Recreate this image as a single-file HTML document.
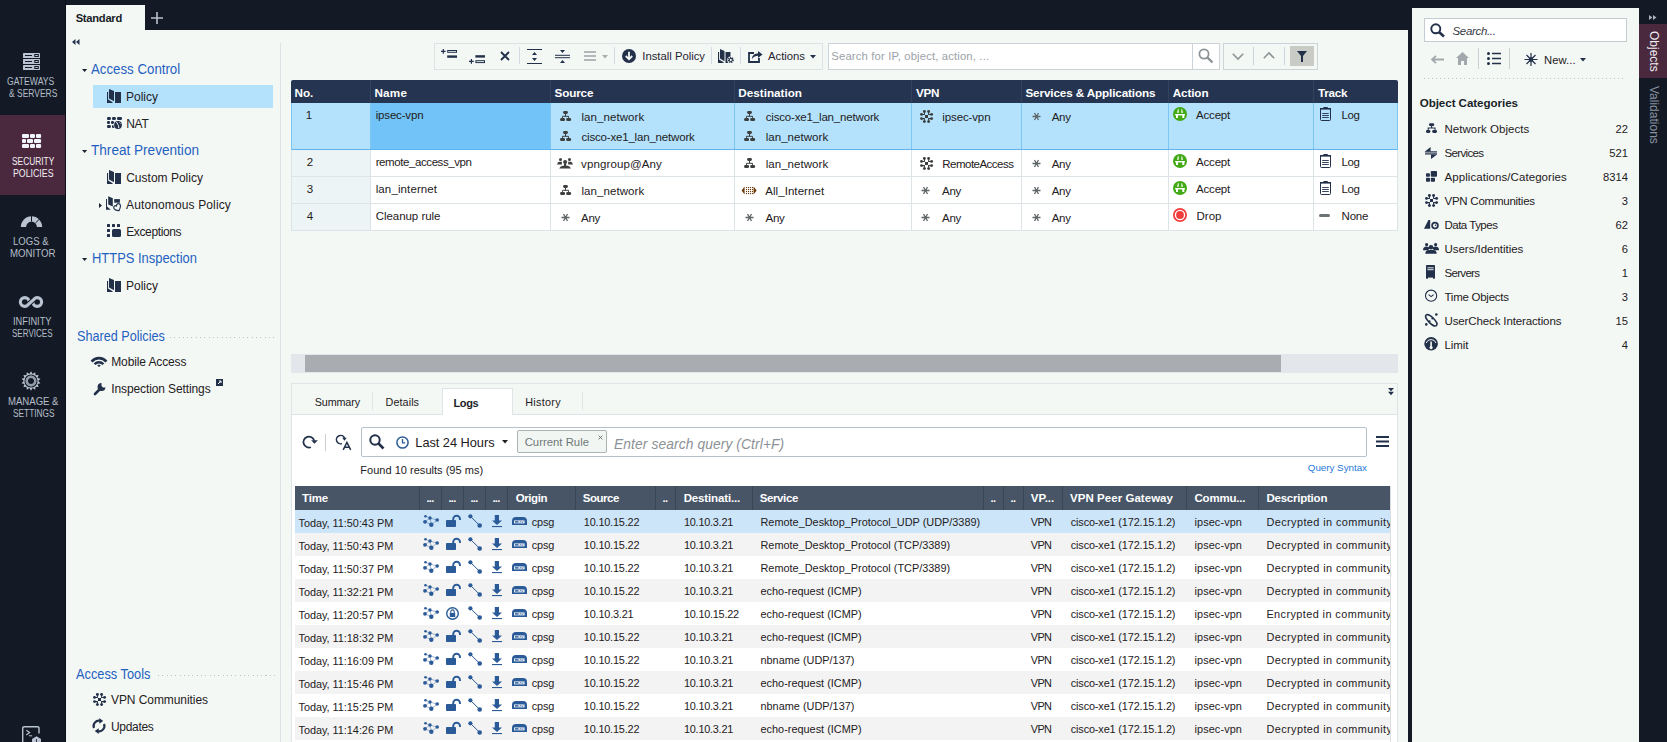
<!DOCTYPE html><html><head><meta charset="utf-8"><style>
*{box-sizing:border-box;margin:0;padding:0}
html,body{width:1667px;height:742px;overflow:hidden;background:#131a25;font-family:"Liberation Sans",sans-serif;color:#1c2330}
.a{position:absolute}
.t{position:absolute;white-space:nowrap;line-height:1}
svg{position:absolute;overflow:visible}
</style></head><body>
<div class="a" style="left:66px;top:30px;width:1342px;height:712px;background:#f4f8f5;"></div>
<div class="a" style="left:66px;top:5px;width:79px;height:25px;background:#f4f8f5;"></div>
<div class="a" style="left:1412px;top:8px;width:227px;height:734px;background:#f4f8f5;"></div>
<div class="a" style="left:1639px;top:24px;width:28px;height:54px;background:#4a293f;"></div>
<div class="a" style="left:0px;top:115px;width:65px;height:80px;background:#4a293f;"></div>
<div class="a" style="left:65px;top:0px;width:1px;height:742px;background:#0b0f17;"></div>
<svg style="left:23px;top:53px" width="17" height="17" viewBox="0 0 17 17"><rect x="0" y="0" width="17" height="5" rx="0.6" fill="#b9c3d1"/><rect x="2" y="2" width="7" height="1" fill="#131a25"/><rect x="11.3" y="1" width="4.5" height="3" fill="#131a25"/><rect x="12.3" y="2" width="2.5" height="1" fill="#b9c3d1"/><rect x="0" y="6" width="17" height="5" rx="0.6" fill="#b9c3d1"/><rect x="2" y="8" width="7" height="1" fill="#131a25"/><rect x="11.3" y="7" width="4.5" height="3" fill="#131a25"/><rect x="12.3" y="8" width="2.5" height="1" fill="#b9c3d1"/><rect x="0" y="12" width="17" height="5" rx="0.6" fill="#b9c3d1"/><rect x="2" y="14" width="7" height="1" fill="#131a25"/><rect x="11.3" y="13" width="4.5" height="3" fill="#131a25"/><rect x="12.3" y="14" width="2.5" height="1" fill="#b9c3d1"/></svg>
<div class="t" style="left:6.90px;top:77px;font-size:10px;color:#b4bdc9;font-weight:400;transform-origin:0 0;transform:scaleX(0.8627);">GATEWAYS</div>
<div class="t" style="left:8.90px;top:89px;font-size:10px;color:#b4bdc9;font-weight:400;transform-origin:0 0;transform:scaleX(0.8464);">&amp; SERVERS</div>
<svg style="left:22px;top:134px" width="19.1" height="14" viewBox="0 0 19.1 14"><rect x="0" y="0" width="7" height="4" rx="1.1" fill="#f0f4fb"/><rect x="8" y="0" width="5" height="4" rx="1.1" fill="#f0f4fb"/><rect x="14" y="0" width="5.1" height="4" rx="1.1" fill="#f0f4fb"/><rect x="0" y="5" width="4" height="4" rx="1.1" fill="#f0f4fb"/><rect x="5" y="5" width="6" height="4" rx="1.1" fill="#f0f4fb"/><rect x="12" y="5" width="7.1" height="4" rx="1.1" fill="#f0f4fb"/><rect x="0" y="10" width="7" height="4" rx="1.1" fill="#f0f4fb"/><rect x="8" y="10" width="5" height="4" rx="1.1" fill="#f0f4fb"/><rect x="14" y="10" width="5.1" height="4" rx="1.1" fill="#f0f4fb"/></svg>
<div class="t" style="left:11.70px;top:157px;font-size:10px;color:#f3eff4;font-weight:400;transform-origin:0 0;transform:scaleX(0.8366);">SECURITY</div>
<div class="t" style="left:12.70px;top:169px;font-size:10px;color:#f3eff4;font-weight:400;transform-origin:0 0;transform:scaleX(0.8778);">POLICIES</div>
<svg style="left:20px;top:215px" width="23" height="13" viewBox="0 0 23 13"><path d="M0.8 12 A10.7 10.7 0 0 1 22.2 12 H16.9 A5.4 5.4 0 0 0 6.1 12 Z" fill="#b9c3d1"/><path d="M11.5 0 V6.5" stroke="#131a25" stroke-width="1"/><path d="M15.3 8.2 L19.5 4" stroke="#131a25" stroke-width="1"/></svg>
<div class="t" style="left:12.70px;top:237px;font-size:10px;color:#b4bdc9;font-weight:400;transform-origin:0 0;transform:scaleX(0.9557);">LOGS &amp;</div>
<div class="t" style="left:9.70px;top:249px;font-size:10px;color:#b4bdc9;font-weight:400;transform-origin:0 0;transform:scaleX(0.9671);">MONITOR</div>
<svg style="left:18px;top:295px" width="26" height="14" viewBox="0 0 26 14"><circle cx="6.8" cy="7" r="4.4" stroke="#b9c3d1" stroke-width="3.2" fill="none"/><circle cx="19.2" cy="7" r="4.4" stroke="#b9c3d1" stroke-width="3.2" fill="none"/><path d="M9.2 10.4 L16.8 3.6" stroke="#131a25" stroke-width="5"/><path d="M9 10.6 L17 3.4" stroke="#b9c3d1" stroke-width="3.2"/></svg>
<div class="t" style="left:12.50px;top:317px;font-size:10px;color:#b4bdc9;font-weight:400;transform-origin:0 0;transform:scaleX(0.9239);">INFINITY</div>
<div class="t" style="left:11.70px;top:329px;font-size:10px;color:#b4bdc9;font-weight:400;transform-origin:0 0;transform:scaleX(0.8037);">SERVICES</div>
<svg style="left:21px;top:371px" width="20" height="20" viewBox="0 0 20 20"><polygon points="10.00,0.30 11.60,2.98 14.21,1.26 14.49,4.37 17.58,3.95 16.49,6.88 19.46,7.84 17.20,10.00 19.46,12.16 16.49,13.12 17.58,16.05 14.49,15.63 14.21,18.74 11.60,17.02 10.00,19.70 8.40,17.02 5.79,18.74 5.51,15.63 2.42,16.05 3.51,13.12 0.54,12.16 2.80,10.00 0.54,7.84 3.51,6.88 2.42,3.95 5.51,4.37 5.79,1.26 8.40,2.98" fill="#b9c3d1"/><circle cx="10" cy="10" r="6" fill="none" stroke="#131a25" stroke-width="1.1"/><circle cx="10" cy="10" r="4.3" fill="none" stroke="#8f99a6" stroke-width="2"/><circle cx="10" cy="10" r="3" fill="#131a25"/></svg>
<div class="t" style="left:7.70px;top:397px;font-size:10px;color:#b4bdc9;font-weight:400;transform-origin:0 0;transform:scaleX(0.9565);">MANAGE &amp;</div>
<div class="t" style="left:12.70px;top:409px;font-size:10px;color:#b4bdc9;font-weight:400;transform-origin:0 0;transform:scaleX(0.8297);">SETTINGS</div>
<svg style="left:22px;top:726px" width="20" height="16" viewBox="0 0 20 16"><path d="M17 7.5 V2.2 Q17 0.7 15.5 0.7 H2.2 Q0.7 0.7 0.7 2.2 V16" stroke="#b9c3d1" stroke-width="1.4" fill="none"/><path d="M4.3 4.3 L7.6 6.6 L4.3 8.9" stroke="#b9c3d1" stroke-width="1.2" fill="none"/><path d="M7 9.8 H10.2" stroke="#b9c3d1" stroke-width="1"/><path d="M10 13 L14.5 10.3 L19 13 V16 H10Z" fill="#b9c3d1"/><path d="M14.5 13 V16" stroke="#131a25" stroke-width="0.8"/></svg>
<div class="t" style="left:75.7px;top:13px;font-size:11.2px;color:#161c26;font-weight:700;letter-spacing:-0.275px;">Standard</div>
<svg style="left:151px;top:12px" width="12" height="12" viewBox="0 0 12 12"><path d="M6 0 V12 M0 6 H12" stroke="#b9c1cc" stroke-width="1.6"/></svg>
<div class="a" style="left:280px;top:43px;width:1px;height:699px;background:#dde2e5;"></div>
<svg style="left:72px;top:39px" width="8" height="6" viewBox="0 0 8 6"><path d="M3.5 0 L0 3 L3.5 6Z M7.5 0 L4 3 L7.5 6Z" fill="#23344f"/></svg>
<svg style="left:82px;top:69px" width="5.2" height="3" viewBox="0 0 5.2 3"><path d="M0 0 H5.2 L2.6 3Z" fill="#1c2233"/></svg>
<div class="t" style="left:91.20px;top:62px;font-size:14px;color:#1f61c0;font-weight:400;transform-origin:0 0;transform:scaleX(0.9474);">Access Control</div>
<div class="a" style="left:93px;top:85px;width:180px;height:23px;background:#b4e2fc;"></div>
<svg style="left:107px;top:89px" width="14" height="14" viewBox="0 0 14 14"><path d="M0 3 H1.1 V10.6 L5.6 13.2 V14 H0Z" fill="#22304a"/><path d="M2 0 L7 2 V12.2 L2 9.6Z" fill="#22304a"/><rect x="8" y="3" width="6" height="11" fill="#22304a"/></svg>
<div class="t" style="left:126px;top:91px;font-size:12px;color:#1e2022;font-weight:400;letter-spacing:-0.003px;">Policy</div>
<svg style="left:107px;top:117px" width="15" height="12" viewBox="0 0 15 12"><g fill="#22304a"><rect x="0" y="0" width="3.9" height="3" rx="1.2"/><rect x="5" y="0" width="3.9" height="3" rx="1.2"/><rect x="10" y="0" width="5" height="3" rx="1.2"/><rect x="0" y="4" width="3" height="3" rx="1.2"/><rect x="4" y="4" width="3" height="3" rx="1.2"/><rect x="0" y="8" width="3.9" height="3" rx="1.2"/><rect x="5" y="8" width="2.5" height="3" rx="1"/></g><circle cx="11" cy="8" r="4.6" fill="#f4f8f5"/><circle cx="11" cy="8" r="3.9" fill="#22304a"/><path d="M9.6 5 L10.6 7.2 L11.5 8.5 L11.8 11 M12.6 5.5 L13.6 6.5" stroke="#f4f8f5" stroke-width="1" fill="none"/></svg>
<div class="t" style="left:126.2px;top:118px;font-size:12px;color:#1e2022;font-weight:400;letter-spacing:-0.270px;">NAT</div>
<svg style="left:82px;top:150px" width="5.2" height="3" viewBox="0 0 5.2 3"><path d="M0 0 H5.2 L2.6 3Z" fill="#1c2233"/></svg>
<div class="t" style="left:91.20px;top:143px;font-size:14px;color:#1f61c0;font-weight:400;transform-origin:0 0;transform:scaleX(0.9704);">Threat Prevention</div>
<svg style="left:107px;top:170px" width="14" height="14" viewBox="0 0 14 14"><path d="M0 3 H1.1 V10.6 L5.6 13.2 V14 H0Z" fill="#22304a"/><path d="M2 0 L7 2 V12.2 L2 9.6Z" fill="#22304a"/><rect x="8" y="3" width="6" height="11" fill="#22304a"/></svg>
<div class="t" style="left:126.2px;top:172px;font-size:12px;color:#1e2022;font-weight:400;letter-spacing:0.009px;">Custom Policy</div>
<svg style="left:99px;top:203px" width="3" height="5" viewBox="0 0 3 5"><path d="M0 0 V5 L3 2.5Z" fill="#1c2233"/></svg>
<svg style="left:106px;top:196px" width="17" height="16" viewBox="0 0 17 16"><path d="M0 3 H1 V10.4 L4.8 13.8 H0Z" fill="#22304a"/><path d="M2.2 0.2 L6.8 2.2 V10.5 L2.2 8.5Z" fill="#22304a"/><rect x="8.2" y="3.1" width="5.7" height="3.6" fill="#22304a"/><path d="M11.5 15 C9 13.5 7.6 11.8 8 10.2 C8.4 8.6 10.3 8.3 11.2 9.6 C12 8 14.3 7.7 15 9.2 C15.6 10.6 14 13 11.5 15Z" fill="none" stroke="#22304a" stroke-width="1.2" transform="rotate(-25 11.5 11.5)"/></svg>
<div class="t" style="left:126px;top:199px;font-size:12px;color:#1e2022;font-weight:400;letter-spacing:0.133px;">Autonomous Policy</div>
<svg style="left:107px;top:224px" width="14" height="13" viewBox="0 0 14 13"><g fill="#22304a"><rect x="0" y="0" width="3" height="3" rx="0.5"/><rect x="5" y="0" width="3" height="3" rx="0.5"/><rect x="10" y="0" width="3" height="3" rx="0.5"/><rect x="0" y="5" width="3" height="3" rx="0.5"/><rect x="0" y="10" width="3" height="3" rx="0.5"/><rect x="5" y="5" width="9" height="8" rx="1.5"/></g></svg>
<div class="t" style="left:126.2px;top:226px;font-size:12px;color:#1e2022;font-weight:400;letter-spacing:-0.370px;">Exceptions</div>
<svg style="left:82px;top:258px" width="5.2" height="3" viewBox="0 0 5.2 3"><path d="M0 0 H5.2 L2.6 3Z" fill="#1c2233"/></svg>
<div class="t" style="left:91.50px;top:251px;font-size:14px;color:#1f61c0;font-weight:400;transform-origin:0 0;transform:scaleX(0.9233);">HTTPS Inspection</div>
<svg style="left:107px;top:278px" width="14" height="14" viewBox="0 0 14 14"><path d="M0 3 H1.1 V10.6 L5.6 13.2 V14 H0Z" fill="#22304a"/><path d="M2 0 L7 2 V12.2 L2 9.6Z" fill="#22304a"/><rect x="8" y="3" width="6" height="11" fill="#22304a"/></svg>
<div class="t" style="left:126px;top:280px;font-size:12px;color:#1e2022;font-weight:400;letter-spacing:-0.003px;">Policy</div>
<div class="t" style="left:76.60px;top:329px;font-size:14px;color:#1f61c0;font-weight:400;transform-origin:0 0;transform:scaleX(0.9025);">Shared Policies</div>
<div class="a" style="left:170px;top:337px;width:105px;height:1px;background:repeating-linear-gradient(90deg,#bcc3ca 0 1px,transparent 1px 4.3px);"></div>
<svg style="left:91px;top:356px" width="16" height="11" viewBox="0 0 16 11"><path d="M0.6 5.6 A9.8 9.8 0 0 1 15.4 5.6" stroke="#22304a" stroke-width="2.7" fill="none"/><path d="M3.6 8.2 A5.8 5.8 0 0 1 12.4 8.2" stroke="#22304a" stroke-width="2.5" fill="none"/><path d="M6.2 9.6 L8 8.6 L9.8 9.6 L8 11Z" fill="#22304a"/></svg>
<div class="t" style="left:111.2px;top:356px;font-size:12px;color:#1e2022;font-weight:400;letter-spacing:-0.116px;">Mobile Access</div>
<svg style="left:93px;top:381px" width="14" height="14" viewBox="0 0 14 14"><path d="M2 13 L8 7" stroke="#22304a" stroke-width="2.6" stroke-linecap="round"/><path d="M8.5 2 A4 4 0 1 0 12.5 6.5 L10 6.5 L8.5 5 Z" fill="#22304a"/></svg>
<div class="t" style="left:111.2px;top:383px;font-size:12px;color:#1e2022;font-weight:400;letter-spacing:-0.106px;">Inspection Settings</div>
<svg style="left:216px;top:379px" width="7" height="7" viewBox="0 0 7 7"><rect x="0" y="0" width="7" height="7" fill="#22304a"/><path d="M2 5 L5 2 M3 2 H5 V4" stroke="#f4f8f5" stroke-width="1" fill="none"/></svg>
<div class="t" style="left:76.00px;top:667px;font-size:14px;color:#1f61c0;font-weight:400;transform-origin:0 0;transform:scaleX(0.9134);">Access Tools</div>
<div class="a" style="left:157.5px;top:675px;width:117px;height:1px;background:repeating-linear-gradient(90deg,#bcc3ca 0 1px,transparent 1px 4.3px);"></div>
<div class="t" style="left:111px;top:694px;font-size:12px;color:#1e2022;font-weight:400;letter-spacing:-0.075px;">VPN Communities</div>
<svg style="left:92px;top:718px" width="14" height="16" viewBox="0 0 14 16"><path d="M2 10 A5.3 5.3 0 0 1 8 2.8" stroke="#22304a" stroke-width="2.2" fill="none"/><path d="M7.3 0 L11.2 3 L7.3 5.8Z" fill="#22304a"/><path d="M12 6 A5.3 5.3 0 0 1 6 13.2" stroke="#22304a" stroke-width="2.2" fill="none"/><path d="M6.7 10.2 L2.8 13.1 L6.7 16Z" fill="#22304a"/></svg>
<div class="t" style="left:111px;top:721px;font-size:12px;color:#1e2022;font-weight:400;letter-spacing:-0.315px;">Updates</div>
<div class="a" style="left:434px;top:43px;width:389px;height:27px;border:1px solid #dce2e6;background:#f4f8f5"></div>
<svg style="left:441px;top:49px" width="16" height="9" viewBox="0 0 16 9"><path d="M2.3 0 V4.8 M0 2.4 H4.6" stroke="#22304a" stroke-width="1.2"/><rect x="6.7" y="1.5" width="8.8" height="1.8" fill="none" stroke="#22304a" stroke-width="1"/><rect x="6.2" y="6.4" width="9.8" height="2.4" fill="#22304a"/></svg>
<svg style="left:469px;top:55px" width="16" height="9" viewBox="0 0 16 9"><path d="M2.4 4 V8.8 M0 6.4 H4.8" stroke="#22304a" stroke-width="1.2"/><rect x="6.4" y="0.2" width="9.6" height="2.4" fill="#22304a"/><rect x="6.9" y="5.7" width="8.6" height="1.9" fill="none" stroke="#22304a" stroke-width="1"/></svg>
<svg style="left:500px;top:51px" width="10" height="10" viewBox="0 0 10 10"><path d="M1 1 L9 9 M9 1 L1 9" stroke="#22304a" stroke-width="1.9"/></svg>
<div class="a" style="left:519px;top:47px;width:1px;height:17px;background:#d5dbe0;"></div>
<svg style="left:527px;top:49px" width="15" height="15" viewBox="0 0 15 15"><path d="M0 0.5 H15 M0 14.5 H15" stroke="#22304a" stroke-width="1.1"/><path d="M7.5 3 L10 6 H5Z M7.5 12 L10 9 H5Z" fill="#22304a"/></svg>
<svg style="left:555px;top:49px" width="15" height="15" viewBox="0 0 15 15"><path d="M0 6.3 H15 M0 8.7 H15" stroke="#22304a" stroke-width="1"/><path d="M7.5 4 L10 1 H5Z M7.5 11 L10 14 H5Z" fill="#22304a"/></svg>
<svg style="left:584px;top:51px" width="13" height="10" viewBox="0 0 13 10"><path d="M0 1 H12 M0 5 H12 M0 9 H12" stroke="#9ea3a6" stroke-width="1.6"/></svg>
<svg style="left:602px;top:55px" width="6" height="3.5" viewBox="0 0 6 3.5"><path d="M0 0 H6 L3 3.5Z" fill="#a8adb0"/></svg>
<div class="a" style="left:614px;top:47px;width:1px;height:17px;background:#d5dbe0;"></div>
<svg style="left:622px;top:49px" width="14" height="14" viewBox="0 0 14 14"><circle cx="7" cy="7" r="7" fill="#22304a"/><path d="M7 2.8 V10 M3.8 7 L7 10.3 L10.2 7" stroke="#f4f8f5" stroke-width="1.8" fill="none"/></svg>
<div class="t" style="left:642.3px;top:51px;font-size:11.3px;color:#1f2530;font-weight:400;letter-spacing:-0.007px;">Install Policy</div>
<div class="a" style="left:711px;top:47px;width:1px;height:17px;background:#d5dbe0;"></div>
<svg style="left:718px;top:49px" width="16" height="14" viewBox="0 0 16 14"><path d="M0 3 H1.1 V10.6 L5.6 13.2 V14 H0Z" fill="#22304a"/><path d="M2 0 L6.5 2 V12.2 L2 9.6Z" fill="#22304a"/><rect x="7.5" y="3" width="5" height="11" fill="#22304a"/><circle cx="12.8" cy="11" r="3.6" fill="#f4f8f5"/><circle cx="12.8" cy="11" r="2.3" fill="none" stroke="#22304a" stroke-width="1.5" stroke-dasharray="1.1 0.7"/><circle cx="12.8" cy="11" r="1.6" fill="none" stroke="#22304a" stroke-width="1"/></svg>
<div class="a" style="left:740px;top:47px;width:1px;height:17px;background:#d5dbe0;"></div>
<svg style="left:748px;top:49px" width="15" height="14" viewBox="0 0 15 14"><path d="M6 4 H1 V13 H11 V9" stroke="#22304a" stroke-width="1.8" fill="none"/><path d="M4 10 C4 6 7 4.5 10 4.5 V2 L14.5 5.5 L10 9 V6.8 C8 6.8 5.5 7.5 4 10Z" fill="#22304a"/></svg>
<div class="t" style="left:768px;top:51px;font-size:11.3px;color:#1f2530;font-weight:400;letter-spacing:-0.007px;">Actions</div>
<svg style="left:810px;top:55px" width="6" height="3.5" viewBox="0 0 6 3.5"><path d="M0 0 H6 L3 3.5Z" fill="#22304a"/></svg>
<div class="a" style="left:828px;top:43px;width:392px;height:27px;border:1px solid #ccd3d9;background:#fff"></div>
<div class="a" style="left:1192px;top:44px;width:1px;height:25px;background:#ccd3d9;"></div>
<div class="t" style="left:831.3px;top:51px;font-size:11.3px;color:#9ba2a8;font-weight:400;letter-spacing:0.144px;">Search for IP, object, action, ...</div>
<svg style="left:1198px;top:48px" width="16" height="16" viewBox="0 0 16 16"><circle cx="6" cy="6" r="4.6" stroke="#8e9496" stroke-width="1.8" fill="none"/><path d="M9.3 9.3 L14.5 14.5" stroke="#8e9496" stroke-width="2.4"/></svg>
<div class="a" style="left:1223px;top:43px;width:95px;height:27px;border:1px solid #ccd3d9;background:#f4f8f5"></div>
<svg style="left:1232px;top:53px" width="12" height="7" viewBox="0 0 12 7"><path d="M0.8 0.8 L6 6 L11.2 0.8" stroke="#8e9496" stroke-width="1.6" fill="none"/></svg>
<div class="a" style="left:1253px;top:47px;width:1px;height:18px;background:#ccd3d9;"></div>
<svg style="left:1263px;top:52px" width="12" height="7" viewBox="0 0 12 7"><path d="M0.8 6.2 L6 1 L11.2 6.2" stroke="#8e9496" stroke-width="1.6" fill="none"/></svg>
<div class="a" style="left:1284px;top:47px;width:1px;height:18px;background:#ccd3d9;"></div>
<div class="a" style="left:1290px;top:46px;width:24px;height:20px;background:#c8cbc6;"></div>
<svg style="left:1297px;top:51px" width="10" height="11" viewBox="0 0 10 11"><path d="M0 0 H10 L6 5 V11 H4 V5Z" fill="#22304a"/></svg>
<div class="a" style="left:291px;top:80px;width:1107px;height:23px;background:#253450;border-radius:2px 2px 0 0"></div>
<div class="a" style="left:370px;top:80px;width:1px;height:23px;background:#34435d;"></div>
<div class="a" style="left:550px;top:80px;width:1px;height:23px;background:#34435d;"></div>
<div class="a" style="left:734px;top:80px;width:1px;height:23px;background:#34435d;"></div>
<div class="a" style="left:911px;top:80px;width:1px;height:23px;background:#34435d;"></div>
<div class="a" style="left:1021px;top:80px;width:1px;height:23px;background:#34435d;"></div>
<div class="a" style="left:1168px;top:80px;width:1px;height:23px;background:#34435d;"></div>
<div class="a" style="left:1313px;top:80px;width:1px;height:23px;background:#34435d;"></div>
<div class="t" style="left:294.6px;top:87px;font-size:11.7px;color:#ffffff;font-weight:700;letter-spacing:-0.043px;">No.</div>
<div class="t" style="left:374.4px;top:87px;font-size:11.7px;color:#ffffff;font-weight:700;letter-spacing:0.264px;">Name</div>
<div class="t" style="left:554.6px;top:87px;font-size:11.7px;color:#ffffff;font-weight:700;letter-spacing:-0.154px;">Source</div>
<div class="t" style="left:738.3px;top:87px;font-size:11.7px;color:#ffffff;font-weight:700;letter-spacing:0.005px;">Destination</div>
<div class="t" style="left:916px;top:87px;font-size:11.7px;color:#ffffff;font-weight:700;letter-spacing:-0.282px;">VPN</div>
<div class="t" style="left:1025.4px;top:87px;font-size:11.7px;color:#ffffff;font-weight:700;letter-spacing:-0.119px;">Services &amp; Applications</div>
<div class="t" style="left:1172.8px;top:87px;font-size:11.7px;color:#ffffff;font-weight:700;letter-spacing:-0.127px;">Action</div>
<div class="t" style="left:1318px;top:87px;font-size:11.7px;color:#ffffff;font-weight:700;letter-spacing:-0.269px;">Track</div>
<div class="a" style="left:291px;top:103px;width:1107px;height:46px;background:#b4e2fc;"></div>
<div class="a" style="left:371px;top:103px;width:179px;height:46px;background:#72c3f7;"></div>
<div class="a" style="left:291px;top:149px;width:1107px;height:1px;background:#5fb4ef;"></div>
<div class="a" style="left:370px;top:103px;width:1px;height:46px;background:#7cc6f4;"></div>
<div class="a" style="left:550px;top:103px;width:1px;height:46px;background:#7cc6f4;"></div>
<div class="a" style="left:734px;top:103px;width:1px;height:46px;background:#7cc6f4;"></div>
<div class="a" style="left:911px;top:103px;width:1px;height:46px;background:#7cc6f4;"></div>
<div class="a" style="left:1021px;top:103px;width:1px;height:46px;background:#7cc6f4;"></div>
<div class="a" style="left:1168px;top:103px;width:1px;height:46px;background:#7cc6f4;"></div>
<div class="a" style="left:1313px;top:103px;width:1px;height:46px;background:#7cc6f4;"></div>
<div class="a" style="left:291px;top:103px;width:1px;height:47px;background:#7cc6f4;"></div>
<div class="a" style="left:1397px;top:103px;width:1px;height:47px;background:#7cc6f4;"></div>
<div class="a" style="left:291px;top:150px;width:79px;height:26px;background:#edf4f5;"></div>
<div class="a" style="left:370px;top:150px;width:1028px;height:26px;background:#ffffff;"></div>
<div class="a" style="left:291px;top:176px;width:1107px;height:1px;background:#dde4e8;"></div>
<div class="a" style="left:370px;top:150px;width:1px;height:26px;background:#dde4e8;"></div>
<div class="a" style="left:550px;top:150px;width:1px;height:26px;background:#dde4e8;"></div>
<div class="a" style="left:734px;top:150px;width:1px;height:26px;background:#dde4e8;"></div>
<div class="a" style="left:911px;top:150px;width:1px;height:26px;background:#dde4e8;"></div>
<div class="a" style="left:1021px;top:150px;width:1px;height:26px;background:#dde4e8;"></div>
<div class="a" style="left:1168px;top:150px;width:1px;height:26px;background:#dde4e8;"></div>
<div class="a" style="left:1313px;top:150px;width:1px;height:26px;background:#dde4e8;"></div>
<div class="a" style="left:291px;top:150px;width:1px;height:26px;background:#dde4e8;"></div>
<div class="a" style="left:1397px;top:150px;width:1px;height:26px;background:#dde4e8;"></div>
<div class="a" style="left:291px;top:177px;width:79px;height:26px;background:#edf4f5;"></div>
<div class="a" style="left:370px;top:177px;width:1028px;height:26px;background:#ffffff;"></div>
<div class="a" style="left:291px;top:203px;width:1107px;height:1px;background:#dde4e8;"></div>
<div class="a" style="left:370px;top:177px;width:1px;height:26px;background:#dde4e8;"></div>
<div class="a" style="left:550px;top:177px;width:1px;height:26px;background:#dde4e8;"></div>
<div class="a" style="left:734px;top:177px;width:1px;height:26px;background:#dde4e8;"></div>
<div class="a" style="left:911px;top:177px;width:1px;height:26px;background:#dde4e8;"></div>
<div class="a" style="left:1021px;top:177px;width:1px;height:26px;background:#dde4e8;"></div>
<div class="a" style="left:1168px;top:177px;width:1px;height:26px;background:#dde4e8;"></div>
<div class="a" style="left:1313px;top:177px;width:1px;height:26px;background:#dde4e8;"></div>
<div class="a" style="left:291px;top:177px;width:1px;height:26px;background:#dde4e8;"></div>
<div class="a" style="left:1397px;top:177px;width:1px;height:26px;background:#dde4e8;"></div>
<div class="a" style="left:291px;top:204px;width:79px;height:26px;background:#edf4f5;"></div>
<div class="a" style="left:370px;top:204px;width:1028px;height:26px;background:#ffffff;"></div>
<div class="a" style="left:291px;top:230px;width:1107px;height:1px;background:#dde4e8;"></div>
<div class="a" style="left:370px;top:204px;width:1px;height:26px;background:#dde4e8;"></div>
<div class="a" style="left:550px;top:204px;width:1px;height:26px;background:#dde4e8;"></div>
<div class="a" style="left:734px;top:204px;width:1px;height:26px;background:#dde4e8;"></div>
<div class="a" style="left:911px;top:204px;width:1px;height:26px;background:#dde4e8;"></div>
<div class="a" style="left:1021px;top:204px;width:1px;height:26px;background:#dde4e8;"></div>
<div class="a" style="left:1168px;top:204px;width:1px;height:26px;background:#dde4e8;"></div>
<div class="a" style="left:1313px;top:204px;width:1px;height:26px;background:#dde4e8;"></div>
<div class="a" style="left:291px;top:204px;width:1px;height:26px;background:#dde4e8;"></div>
<div class="a" style="left:1397px;top:204px;width:1px;height:26px;background:#dde4e8;"></div>
<div class="t" style="left:209px;width:200px;text-align:center;top:110px;font-size:11.5px;color:#1e2022;font-weight:400;">1</div>
<div class="t" style="left:375.7px;top:110px;font-size:11.5px;color:#1e2022;font-weight:400;letter-spacing:-0.169px;">ipsec-vpn</div>
<svg style="left:560px;top:111px" width="11" height="10" viewBox="0 0 11 10"><rect x="3.1" y="0" width="4.8" height="2.9" rx="1.3" fill="#3c3f3e"/><path d="M5.5 2.9 V5.3 M2.5 6.9 V5.3 H8.5 V6.9" stroke="#3c3f3e" stroke-width="1" fill="none"/><rect x="0.1" y="6.9" width="4.9" height="3.2" rx="1.3" fill="#3c3f3e"/><rect x="6.2" y="6.9" width="4.9" height="3.2" rx="1.3" fill="#3c3f3e"/></svg>
<div class="t" style="left:581.5px;top:112px;font-size:11.5px;color:#1e2022;font-weight:400;letter-spacing:0.062px;">lan_network</div>
<svg style="left:560px;top:131px" width="11" height="10" viewBox="0 0 11 10"><rect x="3.1" y="0" width="4.8" height="2.9" rx="1.3" fill="#3c3f3e"/><path d="M5.5 2.9 V5.3 M2.5 6.9 V5.3 H8.5 V6.9" stroke="#3c3f3e" stroke-width="1" fill="none"/><rect x="0.1" y="6.9" width="4.9" height="3.2" rx="1.3" fill="#3c3f3e"/><rect x="6.2" y="6.9" width="4.9" height="3.2" rx="1.3" fill="#3c3f3e"/></svg>
<div class="t" style="left:581.5px;top:132px;font-size:11.5px;color:#1e2022;font-weight:400;letter-spacing:-0.185px;">cisco-xe1_lan_network</div>
<svg style="left:744px;top:111px" width="11" height="10" viewBox="0 0 11 10"><rect x="3.1" y="0" width="4.8" height="2.9" rx="1.3" fill="#3c3f3e"/><path d="M5.5 2.9 V5.3 M2.5 6.9 V5.3 H8.5 V6.9" stroke="#3c3f3e" stroke-width="1" fill="none"/><rect x="0.1" y="6.9" width="4.9" height="3.2" rx="1.3" fill="#3c3f3e"/><rect x="6.2" y="6.9" width="4.9" height="3.2" rx="1.3" fill="#3c3f3e"/></svg>
<div class="t" style="left:765.7px;top:112px;font-size:11.5px;color:#1e2022;font-weight:400;letter-spacing:-0.166px;">cisco-xe1_lan_network</div>
<svg style="left:744px;top:131px" width="11" height="10" viewBox="0 0 11 10"><rect x="3.1" y="0" width="4.8" height="2.9" rx="1.3" fill="#3c3f3e"/><path d="M5.5 2.9 V5.3 M2.5 6.9 V5.3 H8.5 V6.9" stroke="#3c3f3e" stroke-width="1" fill="none"/><rect x="0.1" y="6.9" width="4.9" height="3.2" rx="1.3" fill="#3c3f3e"/><rect x="6.2" y="6.9" width="4.9" height="3.2" rx="1.3" fill="#3c3f3e"/></svg>
<div class="t" style="left:765.7px;top:132px;font-size:11.5px;color:#1e2022;font-weight:400;letter-spacing:0.044px;">lan_network</div>
<svg style="left:920px;top:110px" width="13" height="13" viewBox="0 0 13 13"><path d="M4.4 1.5 V4.4 H1.5 M8.6 1.5 V4.4 H11.6 M11.6 8.6 H8.6 V11.6 M1.5 8.6 H4.4 V11.6" stroke="#3c3f3e" stroke-width="1.05" fill="none"/><circle cx="4.4" cy="1.5" r="1.45" fill="#3c3f3e"/><circle cx="8.6" cy="1.5" r="1.45" fill="#3c3f3e"/><circle cx="11.6" cy="4.4" r="1.45" fill="#3c3f3e"/><circle cx="11.6" cy="8.6" r="1.45" fill="#3c3f3e"/><circle cx="8.6" cy="11.6" r="1.45" fill="#3c3f3e"/><circle cx="4.4" cy="11.6" r="1.45" fill="#3c3f3e"/><circle cx="1.5" cy="8.6" r="1.45" fill="#3c3f3e"/><circle cx="1.5" cy="4.4" r="1.45" fill="#3c3f3e"/><rect x="5" y="5" width="3" height="3" fill="#3c3f3e"/></svg>
<div class="t" style="left:942.3px;top:112px;font-size:11.5px;color:#1e2022;font-weight:400;letter-spacing:-0.124px;">ipsec-vpn</div>
<svg style="left:1032px;top:112px" width="9" height="9" viewBox="0 0 9 9"><path d="M0.5 4.5 H8.5 M2.5 1 L6.5 8 M6.5 1 L2.5 8" stroke="#5e6566" stroke-width="1.3"/></svg>
<div class="t" style="left:1051.7px;top:112px;font-size:11.5px;color:#1e2022;font-weight:400;letter-spacing:-0.243px;">Any</div>
<svg style="left:1173px;top:107px" width="14" height="14" viewBox="0 0 14 14"><circle cx="7" cy="7" r="7" fill="#42aa14"/><rect x="2.1" y="7" width="9.9" height="1.4" fill="#fff"/><rect x="3" y="7" width="2" height="4" fill="#fff"/><rect x="9.3" y="7" width="2" height="4" fill="#fff"/><path d="M4 5.8 H5.8 L5.6 2 H5Z M8.2 5.8 H10 L9 2 H8.6Z" fill="#fff"/></svg>
<div class="t" style="left:1196px;top:110px;font-size:11.5px;color:#1e2022;font-weight:400;letter-spacing:-0.179px;">Accept</div>
<svg style="left:1320px;top:107px" width="11" height="14" viewBox="0 0 11 14"><path d="M0.5 1.5 V12.5 Q0.5 13.5 1.5 13.5 H9.5 Q10.5 13.5 10.5 12.5 V1.5" stroke="#22304a" stroke-width="1" fill="none"/><rect x="0" y="1" width="11" height="1.6" fill="#22304a"/><rect x="3.3" y="0" width="4.6" height="1.4" rx="0.6" fill="#22304a"/><path d="M2.2 6.5 H8.8 M2.2 8.5 H8.8 M2.2 10.5 H8.8" stroke="#22304a" stroke-width="0.9"/></svg>
<div class="t" style="left:1341.5px;top:110px;font-size:11.5px;color:#1e2022;font-weight:400;letter-spacing:-0.429px;">Log</div>
<div class="t" style="left:210px;width:200px;text-align:center;top:157px;font-size:11.5px;color:#1e2022;font-weight:400;">2</div>
<div class="t" style="left:375.7px;top:157px;font-size:11.5px;color:#1e2022;font-weight:400;letter-spacing:-0.413px;">remote_access_vpn</div>
<svg style="left:557px;top:158px" width="16" height="11" viewBox="0 0 16 11"><circle cx="3.5" cy="1.4" r="1.5" fill="#3c3f3e"/><path d="M0 6.4 Q0.6 4.2 2.3 3.8 H4.9 V6.4Z" fill="#3c3f3e"/><circle cx="12.5" cy="1.4" r="1.5" fill="#3c3f3e"/><path d="M11.2 3.8 H13.7 Q15.4 4.2 16 6.4 H11.2Z" fill="#3c3f3e"/><circle cx="8.1" cy="3.9" r="2" fill="#3c3f3e"/><path d="M2.3 10.6 Q3 8.2 5.5 7.8 H7 V5.5 H9.2 V7.8 H10.7 Q13.2 8.2 14 10.6Z" fill="#3c3f3e"/></svg>
<div class="t" style="left:581.1px;top:159px;font-size:11.5px;color:#1e2022;font-weight:400;letter-spacing:0.121px;">vpngroup@Any</div>
<svg style="left:744px;top:158px" width="11" height="10" viewBox="0 0 11 10"><rect x="3.1" y="0" width="4.8" height="2.9" rx="1.3" fill="#3c3f3e"/><path d="M5.5 2.9 V5.3 M2.5 6.9 V5.3 H8.5 V6.9" stroke="#3c3f3e" stroke-width="1" fill="none"/><rect x="0.1" y="6.9" width="4.9" height="3.2" rx="1.3" fill="#3c3f3e"/><rect x="6.2" y="6.9" width="4.9" height="3.2" rx="1.3" fill="#3c3f3e"/></svg>
<div class="t" style="left:765.7px;top:159px;font-size:11.5px;color:#1e2022;font-weight:400;letter-spacing:0.044px;">lan_network</div>
<svg style="left:920px;top:157px" width="13" height="13" viewBox="0 0 13 13"><path d="M4.4 1.5 V4.4 H1.5 M8.6 1.5 V4.4 H11.6 M11.6 8.6 H8.6 V11.6 M1.5 8.6 H4.4 V11.6" stroke="#3c3f3e" stroke-width="1.05" fill="none"/><circle cx="4.4" cy="1.5" r="1.45" fill="#3c3f3e"/><circle cx="8.6" cy="1.5" r="1.45" fill="#3c3f3e"/><circle cx="11.6" cy="4.4" r="1.45" fill="#3c3f3e"/><circle cx="11.6" cy="8.6" r="1.45" fill="#3c3f3e"/><circle cx="8.6" cy="11.6" r="1.45" fill="#3c3f3e"/><circle cx="4.4" cy="11.6" r="1.45" fill="#3c3f3e"/><circle cx="1.5" cy="8.6" r="1.45" fill="#3c3f3e"/><circle cx="1.5" cy="4.4" r="1.45" fill="#3c3f3e"/><rect x="5" y="5" width="3" height="3" fill="#3c3f3e"/></svg>
<div class="t" style="left:942.3px;top:159px;font-size:11.5px;color:#1e2022;font-weight:400;letter-spacing:-0.520px;">RemoteAccess</div>
<svg style="left:1032px;top:159px" width="9" height="9" viewBox="0 0 9 9"><path d="M0.5 4.5 H8.5 M2.5 1 L6.5 8 M6.5 1 L2.5 8" stroke="#5e6566" stroke-width="1.3"/></svg>
<div class="t" style="left:1051.7px;top:159px;font-size:11.5px;color:#1e2022;font-weight:400;letter-spacing:-0.243px;">Any</div>
<svg style="left:1173px;top:154px" width="14" height="14" viewBox="0 0 14 14"><circle cx="7" cy="7" r="7" fill="#42aa14"/><rect x="2.1" y="7" width="9.9" height="1.4" fill="#fff"/><rect x="3" y="7" width="2" height="4" fill="#fff"/><rect x="9.3" y="7" width="2" height="4" fill="#fff"/><path d="M4 5.8 H5.8 L5.6 2 H5Z M8.2 5.8 H10 L9 2 H8.6Z" fill="#fff"/></svg>
<div class="t" style="left:1196px;top:157px;font-size:11.5px;color:#1e2022;font-weight:400;letter-spacing:-0.179px;">Accept</div>
<svg style="left:1320px;top:154px" width="11" height="14" viewBox="0 0 11 14"><path d="M0.5 1.5 V12.5 Q0.5 13.5 1.5 13.5 H9.5 Q10.5 13.5 10.5 12.5 V1.5" stroke="#22304a" stroke-width="1" fill="none"/><rect x="0" y="1" width="11" height="1.6" fill="#22304a"/><rect x="3.3" y="0" width="4.6" height="1.4" rx="0.6" fill="#22304a"/><path d="M2.2 6.5 H8.8 M2.2 8.5 H8.8 M2.2 10.5 H8.8" stroke="#22304a" stroke-width="0.9"/></svg>
<div class="t" style="left:1341.5px;top:157px;font-size:11.5px;color:#1e2022;font-weight:400;letter-spacing:-0.429px;">Log</div>
<div class="t" style="left:210px;width:200px;text-align:center;top:184px;font-size:11.5px;color:#1e2022;font-weight:400;">3</div>
<div class="t" style="left:375.7px;top:184px;font-size:11.5px;color:#1e2022;font-weight:400;letter-spacing:0.116px;">lan_internet</div>
<svg style="left:560px;top:185px" width="11" height="10" viewBox="0 0 11 10"><rect x="3.1" y="0" width="4.8" height="2.9" rx="1.3" fill="#3c3f3e"/><path d="M5.5 2.9 V5.3 M2.5 6.9 V5.3 H8.5 V6.9" stroke="#3c3f3e" stroke-width="1" fill="none"/><rect x="0.1" y="6.9" width="4.9" height="3.2" rx="1.3" fill="#3c3f3e"/><rect x="6.2" y="6.9" width="4.9" height="3.2" rx="1.3" fill="#3c3f3e"/></svg>
<div class="t" style="left:581.5px;top:186px;font-size:11.5px;color:#1e2022;font-weight:400;letter-spacing:0.062px;">lan_network</div>
<svg style="left:741px;top:186px" width="16" height="9" viewBox="0 0 16 9"><path d="M3.6 0.6 L0.6 4.5 L3.6 8.4Z M12.6 0.6 L15.6 4.5 L12.6 8.4Z" fill="#6a3a07"/><rect x="5" y="1" width="1.1" height="1.1" fill="#6a3a07"/><rect x="5" y="3" width="1.1" height="1.1" fill="#6a3a07"/><rect x="5" y="5" width="1.1" height="1.1" fill="#6a3a07"/><rect x="5" y="7" width="1.1" height="1.1" fill="#6a3a07"/><rect x="7" y="1" width="1.1" height="1.1" fill="#6a3a07"/><rect x="7" y="3" width="1.1" height="1.1" fill="#6a3a07"/><rect x="7" y="5" width="1.1" height="1.1" fill="#6a3a07"/><rect x="7" y="7" width="1.1" height="1.1" fill="#6a3a07"/><rect x="9" y="1" width="1.1" height="1.1" fill="#6a3a07"/><rect x="9" y="3" width="1.1" height="1.1" fill="#6a3a07"/><rect x="9" y="5" width="1.1" height="1.1" fill="#6a3a07"/><rect x="9" y="7" width="1.1" height="1.1" fill="#6a3a07"/><rect x="11" y="1" width="1.1" height="1.1" fill="#6a3a07"/><rect x="11" y="3" width="1.1" height="1.1" fill="#6a3a07"/><rect x="11" y="5" width="1.1" height="1.1" fill="#6a3a07"/><rect x="11" y="7" width="1.1" height="1.1" fill="#6a3a07"/></svg>
<div class="t" style="left:765.2px;top:186px;font-size:11.5px;color:#1e2022;font-weight:400;letter-spacing:0.068px;">All_Internet</div>
<svg style="left:921px;top:186px" width="9" height="9" viewBox="0 0 9 9"><path d="M0.5 4.5 H8.5 M2.5 1 L6.5 8 M6.5 1 L2.5 8" stroke="#5e6566" stroke-width="1.3"/></svg>
<div class="t" style="left:942.1px;top:186px;font-size:11.5px;color:#1e2022;font-weight:400;letter-spacing:-0.343px;">Any</div>
<svg style="left:1032px;top:186px" width="9" height="9" viewBox="0 0 9 9"><path d="M0.5 4.5 H8.5 M2.5 1 L6.5 8 M6.5 1 L2.5 8" stroke="#5e6566" stroke-width="1.3"/></svg>
<div class="t" style="left:1051.7px;top:186px;font-size:11.5px;color:#1e2022;font-weight:400;letter-spacing:-0.243px;">Any</div>
<svg style="left:1173px;top:181px" width="14" height="14" viewBox="0 0 14 14"><circle cx="7" cy="7" r="7" fill="#42aa14"/><rect x="2.1" y="7" width="9.9" height="1.4" fill="#fff"/><rect x="3" y="7" width="2" height="4" fill="#fff"/><rect x="9.3" y="7" width="2" height="4" fill="#fff"/><path d="M4 5.8 H5.8 L5.6 2 H5Z M8.2 5.8 H10 L9 2 H8.6Z" fill="#fff"/></svg>
<div class="t" style="left:1196px;top:184px;font-size:11.5px;color:#1e2022;font-weight:400;letter-spacing:-0.179px;">Accept</div>
<svg style="left:1320px;top:181px" width="11" height="14" viewBox="0 0 11 14"><path d="M0.5 1.5 V12.5 Q0.5 13.5 1.5 13.5 H9.5 Q10.5 13.5 10.5 12.5 V1.5" stroke="#22304a" stroke-width="1" fill="none"/><rect x="0" y="1" width="11" height="1.6" fill="#22304a"/><rect x="3.3" y="0" width="4.6" height="1.4" rx="0.6" fill="#22304a"/><path d="M2.2 6.5 H8.8 M2.2 8.5 H8.8 M2.2 10.5 H8.8" stroke="#22304a" stroke-width="0.9"/></svg>
<div class="t" style="left:1341.5px;top:184px;font-size:11.5px;color:#1e2022;font-weight:400;letter-spacing:-0.429px;">Log</div>
<div class="t" style="left:210px;width:200px;text-align:center;top:211px;font-size:11.5px;color:#1e2022;font-weight:400;">4</div>
<div class="t" style="left:375.7px;top:211px;font-size:11.5px;color:#1e2022;font-weight:400;letter-spacing:-0.043px;">Cleanup rule</div>
<svg style="left:561px;top:213px" width="9" height="9" viewBox="0 0 9 9"><path d="M0.5 4.5 H8.5 M2.5 1 L6.5 8 M6.5 1 L2.5 8" stroke="#5e6566" stroke-width="1.3"/></svg>
<div class="t" style="left:581.1px;top:213px;font-size:11.5px;color:#1e2022;font-weight:400;letter-spacing:-0.276px;">Any</div>
<svg style="left:745px;top:213px" width="9" height="9" viewBox="0 0 9 9"><path d="M0.5 4.5 H8.5 M2.5 1 L6.5 8 M6.5 1 L2.5 8" stroke="#5e6566" stroke-width="1.3"/></svg>
<div class="t" style="left:765.5px;top:213px;font-size:11.5px;color:#1e2022;font-weight:400;letter-spacing:-0.276px;">Any</div>
<svg style="left:921px;top:213px" width="9" height="9" viewBox="0 0 9 9"><path d="M0.5 4.5 H8.5 M2.5 1 L6.5 8 M6.5 1 L2.5 8" stroke="#5e6566" stroke-width="1.3"/></svg>
<div class="t" style="left:942.1px;top:213px;font-size:11.5px;color:#1e2022;font-weight:400;letter-spacing:-0.343px;">Any</div>
<svg style="left:1032px;top:213px" width="9" height="9" viewBox="0 0 9 9"><path d="M0.5 4.5 H8.5 M2.5 1 L6.5 8 M6.5 1 L2.5 8" stroke="#5e6566" stroke-width="1.3"/></svg>
<div class="t" style="left:1051.7px;top:213px;font-size:11.5px;color:#1e2022;font-weight:400;letter-spacing:-0.243px;">Any</div>
<svg style="left:1173px;top:208px" width="14" height="14" viewBox="0 0 14 14"><circle cx="7" cy="7" r="6.1" fill="#fff" stroke="#f03c3c" stroke-width="1.8"/><circle cx="7" cy="7" r="3.9" fill="#f03c3c"/></svg>
<div class="t" style="left:1196.5px;top:211px;font-size:11.5px;color:#1e2022;font-weight:400;letter-spacing:0.016px;">Drop</div>
<div class="a" style="left:1319px;top:214px;width:11px;height:3px;background:#6d7275;border-radius:1.5px"></div>
<div class="t" style="left:1341.5px;top:211px;font-size:11.5px;color:#1e2022;font-weight:400;letter-spacing:-0.175px;">None</div>
<div class="a" style="left:291px;top:354px;width:1107px;height:19px;background:#e3e6ea;"></div>
<div class="a" style="left:305px;top:355px;width:976px;height:17px;background:#a9acb1;"></div>
<div class="a" style="left:291px;top:383px;width:1107px;height:360px;border:1px solid #dfe5e6;background:#f4f8f5"></div>
<div class="a" style="left:292px;top:415px;width:1105px;height:327px;background:#ffffff;"></div>
<div class="a" style="left:292px;top:414px;width:1105px;height:1px;background:#dfe5e6;"></div>
<div class="a" style="left:442px;top:388px;width:71px;height:27px;border:1px solid #dfe5e6;border-bottom:none;background:#ffffff"></div>
<div class="a" style="left:372px;top:392px;width:1px;height:18px;background:#dfe5e6;"></div>
<div class="a" style="left:582px;top:392px;width:1px;height:18px;background:#dfe5e6;"></div>
<div class="t" style="left:314.8px;top:397px;font-size:10.8px;color:#1e2022;font-weight:400;letter-spacing:-0.158px;">Summary</div>
<div class="t" style="left:385.6px;top:397px;font-size:10.8px;color:#1e2022;font-weight:400;letter-spacing:0.069px;">Details</div>
<div class="t" style="left:453.6px;top:398px;font-size:11px;color:#1a1f28;font-weight:700;letter-spacing:-0.445px;">Logs</div>
<div class="t" style="left:525.2px;top:397px;font-size:10.8px;color:#1e2022;font-weight:400;letter-spacing:0.301px;">History</div>
<svg style="left:1387.5px;top:388px" width="6" height="7.5" viewBox="0 0 6 7.5"><path d="M0 0 H6 L3 3.2Z M0 3.8 H6 L3 7.2Z" fill="#22304a"/></svg>
<svg style="left:301px;top:434px" width="18" height="16" viewBox="0 0 18 16"><path d="M13.2 6.4 A5.5 5.5 0 1 0 9.9 13.2" stroke="#22304a" stroke-width="1.7" fill="none"/><path d="M10.2 6.3 H16.9 L13.4 9.7Z" fill="#22304a"/></svg>
<div class="a" style="left:325px;top:434px;width:1px;height:17px;background:#c9cfd3;"></div>
<svg style="left:334px;top:433px" width="18" height="18" viewBox="0 0 18 18"><path d="M10.5 5 A4.2 4.2 0 1 0 8 10.6" stroke="#22304a" stroke-width="1.5" fill="none"/><path d="M8.2 4.8 H12.7 L10.5 7.7Z" fill="#22304a"/><path d="M9.2 16.9 L12.9 9.4 L16.7 16.9 M10.6 14.3 H15.2" stroke="#22304a" stroke-width="1.5" fill="none"/></svg>
<div class="a" style="left:361px;top:427px;width:1006px;height:30px;border:1px solid #b3c3c9;border-radius:2px;background:#fff"></div>
<svg style="left:369px;top:434px" width="16" height="16" viewBox="0 0 16 16"><circle cx="6" cy="6" r="4.7" stroke="#22304a" stroke-width="2" fill="none"/><path d="M9.5 9.5 L14.5 14.5" stroke="#22304a" stroke-width="2.6"/></svg>
<svg style="left:396px;top:436px" width="13" height="13" viewBox="0 0 13 13"><circle cx="6.5" cy="6.5" r="5.6" stroke="#2b5b96" stroke-width="1.5" fill="none"/><path d="M6.5 3 V6.8 H9.2" stroke="#2b5b96" stroke-width="1.3" fill="none"/></svg>
<div class="t" style="left:415.3px;top:437px;font-size:12.8px;color:#1e2022;font-weight:400;letter-spacing:-0.036px;">Last 24 Hours</div>
<svg style="left:502px;top:440px" width="6" height="3.5" viewBox="0 0 6 3.5"><path d="M0 0 H6 L3 3.5Z" fill="#1e2022"/></svg>
<div class="a" style="left:517px;top:430px;width:90px;height:23px;border:1px solid #aab5b3;border-radius:2px;background:#f2f6f2"></div>
<div class="t" style="left:524.7px;top:437px;font-size:11.3px;color:#6f767a;font-weight:400;letter-spacing:0.021px;">Current Rule</div>
<svg style="left:597.5px;top:435px" width="5" height="5" viewBox="0 0 5 5"><path d="M0.6 0.6 L4.4 4.4 M4.4 0.6 L0.6 4.4" stroke="#666b6e" stroke-width="0.9"/></svg>
<div class="t" style="left:614px;top:438px;font-size:13.8px;color:#8b9196;font-weight:400;letter-spacing:0.103px;font-style:italic">Enter search query (Ctrl+F)</div>
<svg style="left:1376px;top:436px" width="13" height="11" viewBox="0 0 13 11"><path d="M0 1 H13 M0 5.5 H13 M0 10 H13" stroke="#22304a" stroke-width="2"/></svg>
<div class="t" style="left:1307.8px;top:463px;font-size:9.8px;color:#2a7ad9;font-weight:400;letter-spacing:-0.013px;">Query Syntax</div>
<div class="t" style="left:360.3px;top:465px;font-size:11px;color:#1e2022;font-weight:400;letter-spacing:0.022px;">Found 10 results (95 ms)</div>
<div class="a" style="left:295px;top:486px;width:1095px;height:24px;background:#475567;"></div>
<div class="a" style="left:419px;top:486px;width:1px;height:24px;background:#3a4656;"></div>
<div class="a" style="left:441px;top:486px;width:1px;height:24px;background:#3a4656;"></div>
<div class="a" style="left:463px;top:486px;width:1px;height:24px;background:#3a4656;"></div>
<div class="a" style="left:485px;top:486px;width:1px;height:24px;background:#3a4656;"></div>
<div class="a" style="left:507px;top:486px;width:1px;height:24px;background:#3a4656;"></div>
<div class="a" style="left:575px;top:486px;width:1px;height:24px;background:#3a4656;"></div>
<div class="a" style="left:655px;top:486px;width:1px;height:24px;background:#3a4656;"></div>
<div class="a" style="left:675px;top:486px;width:1px;height:24px;background:#3a4656;"></div>
<div class="a" style="left:752px;top:486px;width:1px;height:24px;background:#3a4656;"></div>
<div class="a" style="left:983px;top:486px;width:1px;height:24px;background:#3a4656;"></div>
<div class="a" style="left:1003px;top:486px;width:1px;height:24px;background:#3a4656;"></div>
<div class="a" style="left:1023px;top:486px;width:1px;height:24px;background:#3a4656;"></div>
<div class="a" style="left:1062px;top:486px;width:1px;height:24px;background:#3a4656;"></div>
<div class="a" style="left:1186px;top:486px;width:1px;height:24px;background:#3a4656;"></div>
<div class="a" style="left:1258px;top:486px;width:1px;height:24px;background:#3a4656;"></div>
<div class="t" style="left:302px;top:493px;font-size:11.5px;color:#ffffff;font-weight:700;letter-spacing:-0.185px;">Time</div>
<div class="t" style="left:515.7px;top:493px;font-size:11.5px;color:#ffffff;font-weight:700;letter-spacing:-0.413px;">Origin</div>
<div class="t" style="left:582.7px;top:493px;font-size:11.5px;color:#ffffff;font-weight:700;letter-spacing:-0.450px;">Source</div>
<div class="t" style="left:683.7px;top:493px;font-size:11.5px;color:#ffffff;font-weight:700;letter-spacing:-0.146px;">Destinati...</div>
<div class="t" style="left:759.7px;top:493px;font-size:11.5px;color:#ffffff;font-weight:700;letter-spacing:-0.377px;">Service</div>
<div class="t" style="left:1030.8px;top:493px;font-size:11.5px;color:#ffffff;font-weight:700;letter-spacing:-0.011px;">VP...</div>
<div class="t" style="left:1070.1px;top:493px;font-size:11.5px;color:#ffffff;font-weight:700;letter-spacing:0.039px;">VPN Peer Gateway</div>
<div class="t" style="left:1194.5px;top:493px;font-size:11.5px;color:#ffffff;font-weight:700;letter-spacing:-0.199px;">Commu...</div>
<div class="t" style="left:1266.4px;top:493px;font-size:11.5px;color:#ffffff;font-weight:700;letter-spacing:-0.224px;">Description</div>
<div class="t" style="left:426.5px;top:493px;font-size:11px;color:#ffffff;font-weight:700;letter-spacing:-0.724px;">...</div>
<div class="t" style="left:448.5px;top:493px;font-size:11px;color:#ffffff;font-weight:700;letter-spacing:-0.724px;">...</div>
<div class="t" style="left:470.5px;top:493px;font-size:11px;color:#ffffff;font-weight:700;letter-spacing:-0.724px;">...</div>
<div class="t" style="left:492.5px;top:493px;font-size:11px;color:#ffffff;font-weight:700;letter-spacing:-0.724px;">...</div>
<div class="t" style="left:662.5px;top:493px;font-size:11px;color:#ffffff;font-weight:700;letter-spacing:-0.562px;">..</div>
<div class="t" style="left:990.5px;top:493px;font-size:11px;color:#ffffff;font-weight:700;letter-spacing:-0.562px;">..</div>
<div class="t" style="left:1010.5px;top:493px;font-size:11px;color:#ffffff;font-weight:700;letter-spacing:-0.562px;">..</div>
<div class="a" style="left:295px;top:510px;width:1095px;height:23px;background:#cde5f8;"></div>
<div class="t" style="left:298.5px;top:518px;font-size:10.9px;color:#1e2022;font-weight:400;letter-spacing:-0.031px;">Today, 11:50:43 PM</div>
<svg style="left:423px;top:514px" width="16" height="13" viewBox="0 0 16 13"><path d="M2.5 2.3 L7 4 L14.2 6 M7 4 L2 7.8 L8.3 10.7 L14.2 6 M7 4 L8.3 10.7" stroke="#2a5a97" stroke-width="0.6" fill="none" opacity="0.7"/><circle cx="2.5" cy="2.3" r="1.3" fill="#2a5a97"/><circle cx="7" cy="4" r="1.7" fill="#2a5a97"/><circle cx="14.2" cy="6" r="1.8" fill="#2a5a97"/><circle cx="2" cy="7.8" r="1.9" fill="#2a5a97"/><circle cx="8.3" cy="10.7" r="2.2" fill="#2a5a97"/></svg>
<svg style="left:446px;top:515px" width="16" height="12" viewBox="0 0 16 12"><rect x="0" y="5" width="10" height="7" rx="0.8" fill="#2a5a97"/><path d="M7.2 5.5 V4.2 A3.3 3.3 0 0 1 14 4.2 V5" stroke="#2a5a97" stroke-width="1.9" fill="none"/></svg>
<svg style="left:468px;top:514px" width="14" height="14" viewBox="0 0 14 14"><path d="M2.4 2.3 L11.7 11.5" stroke="#2a5a97" stroke-width="1"/><circle cx="2.4" cy="2.3" r="2.1" fill="#2a5a97"/><circle cx="11.7" cy="11.5" r="2.3" fill="#2a5a97"/></svg>
<svg style="left:492px;top:515px" width="10" height="13" viewBox="0 0 10 13"><rect x="2.8" y="0" width="4.2" height="6" fill="#2a5a97"/><path d="M0 5.5 H10 L5 10Z" fill="#2a5a97"/><rect x="0" y="11" width="10" height="1.1" fill="#2a5a97"/></svg>
<svg style="left:512px;top:517px" width="15" height="8" viewBox="0 0 15 8"><path d="M0 8 V4 Q0 0 4 0 H11 Q15 0 15 4 V8Z" fill="#2a5a97"/><rect x="2" y="3.4" width="10.6" height="3" fill="#e8eef5"/><rect x="3" y="4.2" width="3.5" height="1.4" fill="#2a5a97"/><path d="M7.5 5.8 L9 4.4 L10 5.6 L11.5 4.2" stroke="#2a5a97" stroke-width="0.7" fill="none"/></svg>
<div class="t" style="left:531.8px;top:517px;font-size:10.9px;color:#1e2022;font-weight:400;letter-spacing:-0.129px;">cpsg</div>
<div class="t" style="left:583.8px;top:517px;font-size:10.9px;color:#1e2022;font-weight:400;letter-spacing:-0.186px;">10.10.15.22</div>
<div class="t" style="left:684px;top:517px;font-size:10.9px;color:#1e2022;font-weight:400;letter-spacing:-0.248px;">10.10.3.21</div>
<div class="t" style="left:760.5px;top:517px;font-size:10.9px;color:#1e2022;font-weight:400;letter-spacing:0.004px;">Remote_Desktop_Protocol_UDP (UDP/3389)</div>
<div class="t" style="left:1030.8px;top:517px;font-size:10.9px;color:#1e2022;font-weight:400;letter-spacing:-0.635px;">VPN</div>
<div class="t" style="left:1070.8px;top:517px;font-size:10.9px;color:#1e2022;font-weight:400;letter-spacing:-0.148px;">cisco-xe1 (172.15.1.2)</div>
<div class="t" style="left:1194.5px;top:517px;font-size:10.9px;color:#1e2022;font-weight:400;letter-spacing:0.097px;">ipsec-vpn</div>
<div class="t" style="left:1266.4px;top:517px;width:123.6px;overflow:hidden;font-size:10.9px;letter-spacing:0.417px;color:#1e2022">Decrypted in community</div>
<div class="a" style="left:295px;top:533px;width:1095px;height:23px;background:#f3f3f3;"></div>
<div class="t" style="left:298.5px;top:541px;font-size:10.9px;color:#1e2022;font-weight:400;letter-spacing:-0.031px;">Today, 11:50:43 PM</div>
<svg style="left:423px;top:537px" width="16" height="13" viewBox="0 0 16 13"><path d="M2.5 2.3 L7 4 L14.2 6 M7 4 L2 7.8 L8.3 10.7 L14.2 6 M7 4 L8.3 10.7" stroke="#2a5a97" stroke-width="0.6" fill="none" opacity="0.7"/><circle cx="2.5" cy="2.3" r="1.3" fill="#2a5a97"/><circle cx="7" cy="4" r="1.7" fill="#2a5a97"/><circle cx="14.2" cy="6" r="1.8" fill="#2a5a97"/><circle cx="2" cy="7.8" r="1.9" fill="#2a5a97"/><circle cx="8.3" cy="10.7" r="2.2" fill="#2a5a97"/></svg>
<svg style="left:446px;top:538px" width="16" height="12" viewBox="0 0 16 12"><rect x="0" y="5" width="10" height="7" rx="0.8" fill="#2a5a97"/><path d="M7.2 5.5 V4.2 A3.3 3.3 0 0 1 14 4.2 V5" stroke="#2a5a97" stroke-width="1.9" fill="none"/></svg>
<svg style="left:468px;top:537px" width="14" height="14" viewBox="0 0 14 14"><path d="M2.4 2.3 L11.7 11.5" stroke="#2a5a97" stroke-width="1"/><circle cx="2.4" cy="2.3" r="2.1" fill="#2a5a97"/><circle cx="11.7" cy="11.5" r="2.3" fill="#2a5a97"/></svg>
<svg style="left:492px;top:538px" width="10" height="13" viewBox="0 0 10 13"><rect x="2.8" y="0" width="4.2" height="6" fill="#2a5a97"/><path d="M0 5.5 H10 L5 10Z" fill="#2a5a97"/><rect x="0" y="11" width="10" height="1.1" fill="#2a5a97"/></svg>
<svg style="left:512px;top:540px" width="15" height="8" viewBox="0 0 15 8"><path d="M0 8 V4 Q0 0 4 0 H11 Q15 0 15 4 V8Z" fill="#2a5a97"/><rect x="2" y="3.4" width="10.6" height="3" fill="#e8eef5"/><rect x="3" y="4.2" width="3.5" height="1.4" fill="#2a5a97"/><path d="M7.5 5.8 L9 4.4 L10 5.6 L11.5 4.2" stroke="#2a5a97" stroke-width="0.7" fill="none"/></svg>
<div class="t" style="left:531.8px;top:540px;font-size:10.9px;color:#1e2022;font-weight:400;letter-spacing:-0.129px;">cpsg</div>
<div class="t" style="left:583.8px;top:540px;font-size:10.9px;color:#1e2022;font-weight:400;letter-spacing:-0.186px;">10.10.15.22</div>
<div class="t" style="left:684px;top:540px;font-size:10.9px;color:#1e2022;font-weight:400;letter-spacing:-0.248px;">10.10.3.21</div>
<div class="t" style="left:760.5px;top:540px;font-size:10.9px;color:#1e2022;font-weight:400;letter-spacing:0.004px;">Remote_Desktop_Protocol (TCP/3389)</div>
<div class="t" style="left:1030.8px;top:540px;font-size:10.9px;color:#1e2022;font-weight:400;letter-spacing:-0.635px;">VPN</div>
<div class="t" style="left:1070.8px;top:540px;font-size:10.9px;color:#1e2022;font-weight:400;letter-spacing:-0.148px;">cisco-xe1 (172.15.1.2)</div>
<div class="t" style="left:1194.5px;top:540px;font-size:10.9px;color:#1e2022;font-weight:400;letter-spacing:0.097px;">ipsec-vpn</div>
<div class="t" style="left:1266.4px;top:540px;width:123.6px;overflow:hidden;font-size:10.9px;letter-spacing:0.417px;color:#1e2022">Decrypted in community</div>
<div class="a" style="left:295px;top:556px;width:1095px;height:23px;background:#ffffff;"></div>
<div class="t" style="left:298.5px;top:564px;font-size:10.9px;color:#1e2022;font-weight:400;letter-spacing:-0.031px;">Today, 11:50:37 PM</div>
<svg style="left:423px;top:560px" width="16" height="13" viewBox="0 0 16 13"><path d="M2.5 2.3 L7 4 L14.2 6 M7 4 L2 7.8 L8.3 10.7 L14.2 6 M7 4 L8.3 10.7" stroke="#2a5a97" stroke-width="0.6" fill="none" opacity="0.7"/><circle cx="2.5" cy="2.3" r="1.3" fill="#2a5a97"/><circle cx="7" cy="4" r="1.7" fill="#2a5a97"/><circle cx="14.2" cy="6" r="1.8" fill="#2a5a97"/><circle cx="2" cy="7.8" r="1.9" fill="#2a5a97"/><circle cx="8.3" cy="10.7" r="2.2" fill="#2a5a97"/></svg>
<svg style="left:446px;top:561px" width="16" height="12" viewBox="0 0 16 12"><rect x="0" y="5" width="10" height="7" rx="0.8" fill="#2a5a97"/><path d="M7.2 5.5 V4.2 A3.3 3.3 0 0 1 14 4.2 V5" stroke="#2a5a97" stroke-width="1.9" fill="none"/></svg>
<svg style="left:468px;top:560px" width="14" height="14" viewBox="0 0 14 14"><path d="M2.4 2.3 L11.7 11.5" stroke="#2a5a97" stroke-width="1"/><circle cx="2.4" cy="2.3" r="2.1" fill="#2a5a97"/><circle cx="11.7" cy="11.5" r="2.3" fill="#2a5a97"/></svg>
<svg style="left:492px;top:561px" width="10" height="13" viewBox="0 0 10 13"><rect x="2.8" y="0" width="4.2" height="6" fill="#2a5a97"/><path d="M0 5.5 H10 L5 10Z" fill="#2a5a97"/><rect x="0" y="11" width="10" height="1.1" fill="#2a5a97"/></svg>
<svg style="left:512px;top:563px" width="15" height="8" viewBox="0 0 15 8"><path d="M0 8 V4 Q0 0 4 0 H11 Q15 0 15 4 V8Z" fill="#2a5a97"/><rect x="2" y="3.4" width="10.6" height="3" fill="#e8eef5"/><rect x="3" y="4.2" width="3.5" height="1.4" fill="#2a5a97"/><path d="M7.5 5.8 L9 4.4 L10 5.6 L11.5 4.2" stroke="#2a5a97" stroke-width="0.7" fill="none"/></svg>
<div class="t" style="left:531.8px;top:563px;font-size:10.9px;color:#1e2022;font-weight:400;letter-spacing:-0.129px;">cpsg</div>
<div class="t" style="left:583.8px;top:563px;font-size:10.9px;color:#1e2022;font-weight:400;letter-spacing:-0.186px;">10.10.15.22</div>
<div class="t" style="left:684px;top:563px;font-size:10.9px;color:#1e2022;font-weight:400;letter-spacing:-0.248px;">10.10.3.21</div>
<div class="t" style="left:760.5px;top:563px;font-size:10.9px;color:#1e2022;font-weight:400;letter-spacing:0.004px;">Remote_Desktop_Protocol (TCP/3389)</div>
<div class="t" style="left:1030.8px;top:563px;font-size:10.9px;color:#1e2022;font-weight:400;letter-spacing:-0.635px;">VPN</div>
<div class="t" style="left:1070.8px;top:563px;font-size:10.9px;color:#1e2022;font-weight:400;letter-spacing:-0.148px;">cisco-xe1 (172.15.1.2)</div>
<div class="t" style="left:1194.5px;top:563px;font-size:10.9px;color:#1e2022;font-weight:400;letter-spacing:0.097px;">ipsec-vpn</div>
<div class="t" style="left:1266.4px;top:563px;width:123.6px;overflow:hidden;font-size:10.9px;letter-spacing:0.417px;color:#1e2022">Decrypted in community</div>
<div class="a" style="left:295px;top:579px;width:1095px;height:23px;background:#f3f3f3;"></div>
<div class="t" style="left:298.5px;top:587px;font-size:10.9px;color:#1e2022;font-weight:400;letter-spacing:-0.031px;">Today, 11:32:21 PM</div>
<svg style="left:423px;top:583px" width="16" height="13" viewBox="0 0 16 13"><path d="M2.5 2.3 L7 4 L14.2 6 M7 4 L2 7.8 L8.3 10.7 L14.2 6 M7 4 L8.3 10.7" stroke="#2a5a97" stroke-width="0.6" fill="none" opacity="0.7"/><circle cx="2.5" cy="2.3" r="1.3" fill="#2a5a97"/><circle cx="7" cy="4" r="1.7" fill="#2a5a97"/><circle cx="14.2" cy="6" r="1.8" fill="#2a5a97"/><circle cx="2" cy="7.8" r="1.9" fill="#2a5a97"/><circle cx="8.3" cy="10.7" r="2.2" fill="#2a5a97"/></svg>
<svg style="left:446px;top:584px" width="16" height="12" viewBox="0 0 16 12"><rect x="0" y="5" width="10" height="7" rx="0.8" fill="#2a5a97"/><path d="M7.2 5.5 V4.2 A3.3 3.3 0 0 1 14 4.2 V5" stroke="#2a5a97" stroke-width="1.9" fill="none"/></svg>
<svg style="left:468px;top:583px" width="14" height="14" viewBox="0 0 14 14"><path d="M2.4 2.3 L11.7 11.5" stroke="#2a5a97" stroke-width="1"/><circle cx="2.4" cy="2.3" r="2.1" fill="#2a5a97"/><circle cx="11.7" cy="11.5" r="2.3" fill="#2a5a97"/></svg>
<svg style="left:492px;top:584px" width="10" height="13" viewBox="0 0 10 13"><rect x="2.8" y="0" width="4.2" height="6" fill="#2a5a97"/><path d="M0 5.5 H10 L5 10Z" fill="#2a5a97"/><rect x="0" y="11" width="10" height="1.1" fill="#2a5a97"/></svg>
<svg style="left:512px;top:586px" width="15" height="8" viewBox="0 0 15 8"><path d="M0 8 V4 Q0 0 4 0 H11 Q15 0 15 4 V8Z" fill="#2a5a97"/><rect x="2" y="3.4" width="10.6" height="3" fill="#e8eef5"/><rect x="3" y="4.2" width="3.5" height="1.4" fill="#2a5a97"/><path d="M7.5 5.8 L9 4.4 L10 5.6 L11.5 4.2" stroke="#2a5a97" stroke-width="0.7" fill="none"/></svg>
<div class="t" style="left:531.8px;top:586px;font-size:10.9px;color:#1e2022;font-weight:400;letter-spacing:-0.129px;">cpsg</div>
<div class="t" style="left:583.8px;top:586px;font-size:10.9px;color:#1e2022;font-weight:400;letter-spacing:-0.186px;">10.10.15.22</div>
<div class="t" style="left:684px;top:586px;font-size:10.9px;color:#1e2022;font-weight:400;letter-spacing:-0.248px;">10.10.3.21</div>
<div class="t" style="left:760.5px;top:586px;font-size:10.9px;color:#1e2022;font-weight:400;letter-spacing:0.004px;">echo-request (ICMP)</div>
<div class="t" style="left:1030.8px;top:586px;font-size:10.9px;color:#1e2022;font-weight:400;letter-spacing:-0.635px;">VPN</div>
<div class="t" style="left:1070.8px;top:586px;font-size:10.9px;color:#1e2022;font-weight:400;letter-spacing:-0.148px;">cisco-xe1 (172.15.1.2)</div>
<div class="t" style="left:1194.5px;top:586px;font-size:10.9px;color:#1e2022;font-weight:400;letter-spacing:0.097px;">ipsec-vpn</div>
<div class="t" style="left:1266.4px;top:586px;width:123.6px;overflow:hidden;font-size:10.9px;letter-spacing:0.417px;color:#1e2022">Decrypted in community</div>
<div class="a" style="left:295px;top:602px;width:1095px;height:23px;background:#ffffff;"></div>
<div class="t" style="left:298.5px;top:610px;font-size:10.9px;color:#1e2022;font-weight:400;letter-spacing:-0.031px;">Today, 11:20:57 PM</div>
<svg style="left:423px;top:606px" width="16" height="13" viewBox="0 0 16 13"><path d="M2.5 2.3 L7 4 L14.2 6 M7 4 L2 7.8 L8.3 10.7 L14.2 6 M7 4 L8.3 10.7" stroke="#2a5a97" stroke-width="0.6" fill="none" opacity="0.7"/><circle cx="2.5" cy="2.3" r="1.3" fill="#2a5a97"/><circle cx="7" cy="4" r="1.7" fill="#2a5a97"/><circle cx="14.2" cy="6" r="1.8" fill="#2a5a97"/><circle cx="2" cy="7.8" r="1.9" fill="#2a5a97"/><circle cx="8.3" cy="10.7" r="2.2" fill="#2a5a97"/></svg>
<svg style="left:446px;top:607px" width="13" height="13" viewBox="0 0 13 13"><circle cx="6.5" cy="6.5" r="5.8" fill="none" stroke="#2a5a97" stroke-width="1.4"/><rect x="3.8" y="6" width="5.4" height="4" fill="#2a5a97"/><path d="M4.8 6.2 V4.6 A1.7 1.7 0 0 1 8.2 4.6 V6.2" stroke="#2a5a97" stroke-width="1.1" fill="none"/></svg>
<svg style="left:468px;top:606px" width="14" height="14" viewBox="0 0 14 14"><path d="M2.4 2.3 L11.7 11.5" stroke="#2a5a97" stroke-width="1"/><circle cx="2.4" cy="2.3" r="2.1" fill="#2a5a97"/><circle cx="11.7" cy="11.5" r="2.3" fill="#2a5a97"/></svg>
<svg style="left:492px;top:607px" width="10" height="13" viewBox="0 0 10 13"><rect x="2.8" y="0" width="4.2" height="6" fill="#2a5a97"/><path d="M0 5.5 H10 L5 10Z" fill="#2a5a97"/><rect x="0" y="11" width="10" height="1.1" fill="#2a5a97"/></svg>
<svg style="left:512px;top:609px" width="15" height="8" viewBox="0 0 15 8"><path d="M0 8 V4 Q0 0 4 0 H11 Q15 0 15 4 V8Z" fill="#2a5a97"/><rect x="2" y="3.4" width="10.6" height="3" fill="#e8eef5"/><rect x="3" y="4.2" width="3.5" height="1.4" fill="#2a5a97"/><path d="M7.5 5.8 L9 4.4 L10 5.6 L11.5 4.2" stroke="#2a5a97" stroke-width="0.7" fill="none"/></svg>
<div class="t" style="left:531.8px;top:609px;font-size:10.9px;color:#1e2022;font-weight:400;letter-spacing:-0.129px;">cpsg</div>
<div class="t" style="left:583.8px;top:609px;font-size:10.9px;color:#1e2022;font-weight:400;letter-spacing:-0.183px;">10.10.3.21</div>
<div class="t" style="left:684px;top:609px;font-size:10.9px;color:#1e2022;font-weight:400;letter-spacing:-0.252px;">10.10.15.22</div>
<div class="t" style="left:760.5px;top:609px;font-size:10.9px;color:#1e2022;font-weight:400;letter-spacing:0.004px;">echo-request (ICMP)</div>
<div class="t" style="left:1030.8px;top:609px;font-size:10.9px;color:#1e2022;font-weight:400;letter-spacing:-0.635px;">VPN</div>
<div class="t" style="left:1070.8px;top:609px;font-size:10.9px;color:#1e2022;font-weight:400;letter-spacing:-0.148px;">cisco-xe1 (172.15.1.2)</div>
<div class="t" style="left:1194.5px;top:609px;font-size:10.9px;color:#1e2022;font-weight:400;letter-spacing:0.097px;">ipsec-vpn</div>
<div class="t" style="left:1266.4px;top:609px;width:123.6px;overflow:hidden;font-size:10.9px;letter-spacing:0.415px;color:#1e2022">Encrypted in community</div>
<div class="a" style="left:295px;top:625px;width:1095px;height:23px;background:#f3f3f3;"></div>
<div class="t" style="left:298.5px;top:633px;font-size:10.9px;color:#1e2022;font-weight:400;letter-spacing:-0.031px;">Today, 11:18:32 PM</div>
<svg style="left:423px;top:629px" width="16" height="13" viewBox="0 0 16 13"><path d="M2.5 2.3 L7 4 L14.2 6 M7 4 L2 7.8 L8.3 10.7 L14.2 6 M7 4 L8.3 10.7" stroke="#2a5a97" stroke-width="0.6" fill="none" opacity="0.7"/><circle cx="2.5" cy="2.3" r="1.3" fill="#2a5a97"/><circle cx="7" cy="4" r="1.7" fill="#2a5a97"/><circle cx="14.2" cy="6" r="1.8" fill="#2a5a97"/><circle cx="2" cy="7.8" r="1.9" fill="#2a5a97"/><circle cx="8.3" cy="10.7" r="2.2" fill="#2a5a97"/></svg>
<svg style="left:446px;top:630px" width="16" height="12" viewBox="0 0 16 12"><rect x="0" y="5" width="10" height="7" rx="0.8" fill="#2a5a97"/><path d="M7.2 5.5 V4.2 A3.3 3.3 0 0 1 14 4.2 V5" stroke="#2a5a97" stroke-width="1.9" fill="none"/></svg>
<svg style="left:468px;top:629px" width="14" height="14" viewBox="0 0 14 14"><path d="M2.4 2.3 L11.7 11.5" stroke="#2a5a97" stroke-width="1"/><circle cx="2.4" cy="2.3" r="2.1" fill="#2a5a97"/><circle cx="11.7" cy="11.5" r="2.3" fill="#2a5a97"/></svg>
<svg style="left:492px;top:630px" width="10" height="13" viewBox="0 0 10 13"><rect x="2.8" y="0" width="4.2" height="6" fill="#2a5a97"/><path d="M0 5.5 H10 L5 10Z" fill="#2a5a97"/><rect x="0" y="11" width="10" height="1.1" fill="#2a5a97"/></svg>
<svg style="left:512px;top:632px" width="15" height="8" viewBox="0 0 15 8"><path d="M0 8 V4 Q0 0 4 0 H11 Q15 0 15 4 V8Z" fill="#2a5a97"/><rect x="2" y="3.4" width="10.6" height="3" fill="#e8eef5"/><rect x="3" y="4.2" width="3.5" height="1.4" fill="#2a5a97"/><path d="M7.5 5.8 L9 4.4 L10 5.6 L11.5 4.2" stroke="#2a5a97" stroke-width="0.7" fill="none"/></svg>
<div class="t" style="left:531.8px;top:632px;font-size:10.9px;color:#1e2022;font-weight:400;letter-spacing:-0.129px;">cpsg</div>
<div class="t" style="left:583.8px;top:632px;font-size:10.9px;color:#1e2022;font-weight:400;letter-spacing:-0.186px;">10.10.15.22</div>
<div class="t" style="left:684px;top:632px;font-size:10.9px;color:#1e2022;font-weight:400;letter-spacing:-0.248px;">10.10.3.21</div>
<div class="t" style="left:760.5px;top:632px;font-size:10.9px;color:#1e2022;font-weight:400;letter-spacing:0.004px;">echo-request (ICMP)</div>
<div class="t" style="left:1030.8px;top:632px;font-size:10.9px;color:#1e2022;font-weight:400;letter-spacing:-0.635px;">VPN</div>
<div class="t" style="left:1070.8px;top:632px;font-size:10.9px;color:#1e2022;font-weight:400;letter-spacing:-0.148px;">cisco-xe1 (172.15.1.2)</div>
<div class="t" style="left:1194.5px;top:632px;font-size:10.9px;color:#1e2022;font-weight:400;letter-spacing:0.097px;">ipsec-vpn</div>
<div class="t" style="left:1266.4px;top:632px;width:123.6px;overflow:hidden;font-size:10.9px;letter-spacing:0.417px;color:#1e2022">Decrypted in community</div>
<div class="a" style="left:295px;top:648px;width:1095px;height:23px;background:#ffffff;"></div>
<div class="t" style="left:298.5px;top:656px;font-size:10.9px;color:#1e2022;font-weight:400;letter-spacing:-0.031px;">Today, 11:16:09 PM</div>
<svg style="left:423px;top:652px" width="16" height="13" viewBox="0 0 16 13"><path d="M2.5 2.3 L7 4 L14.2 6 M7 4 L2 7.8 L8.3 10.7 L14.2 6 M7 4 L8.3 10.7" stroke="#2a5a97" stroke-width="0.6" fill="none" opacity="0.7"/><circle cx="2.5" cy="2.3" r="1.3" fill="#2a5a97"/><circle cx="7" cy="4" r="1.7" fill="#2a5a97"/><circle cx="14.2" cy="6" r="1.8" fill="#2a5a97"/><circle cx="2" cy="7.8" r="1.9" fill="#2a5a97"/><circle cx="8.3" cy="10.7" r="2.2" fill="#2a5a97"/></svg>
<svg style="left:446px;top:653px" width="16" height="12" viewBox="0 0 16 12"><rect x="0" y="5" width="10" height="7" rx="0.8" fill="#2a5a97"/><path d="M7.2 5.5 V4.2 A3.3 3.3 0 0 1 14 4.2 V5" stroke="#2a5a97" stroke-width="1.9" fill="none"/></svg>
<svg style="left:468px;top:652px" width="14" height="14" viewBox="0 0 14 14"><path d="M2.4 2.3 L11.7 11.5" stroke="#2a5a97" stroke-width="1"/><circle cx="2.4" cy="2.3" r="2.1" fill="#2a5a97"/><circle cx="11.7" cy="11.5" r="2.3" fill="#2a5a97"/></svg>
<svg style="left:492px;top:653px" width="10" height="13" viewBox="0 0 10 13"><rect x="2.8" y="0" width="4.2" height="6" fill="#2a5a97"/><path d="M0 5.5 H10 L5 10Z" fill="#2a5a97"/><rect x="0" y="11" width="10" height="1.1" fill="#2a5a97"/></svg>
<svg style="left:512px;top:655px" width="15" height="8" viewBox="0 0 15 8"><path d="M0 8 V4 Q0 0 4 0 H11 Q15 0 15 4 V8Z" fill="#2a5a97"/><rect x="2" y="3.4" width="10.6" height="3" fill="#e8eef5"/><rect x="3" y="4.2" width="3.5" height="1.4" fill="#2a5a97"/><path d="M7.5 5.8 L9 4.4 L10 5.6 L11.5 4.2" stroke="#2a5a97" stroke-width="0.7" fill="none"/></svg>
<div class="t" style="left:531.8px;top:655px;font-size:10.9px;color:#1e2022;font-weight:400;letter-spacing:-0.129px;">cpsg</div>
<div class="t" style="left:583.8px;top:655px;font-size:10.9px;color:#1e2022;font-weight:400;letter-spacing:-0.186px;">10.10.15.22</div>
<div class="t" style="left:684px;top:655px;font-size:10.9px;color:#1e2022;font-weight:400;letter-spacing:-0.248px;">10.10.3.21</div>
<div class="t" style="left:760.5px;top:655px;font-size:10.9px;color:#1e2022;font-weight:400;letter-spacing:0.005px;">nbname (UDP/137)</div>
<div class="t" style="left:1030.8px;top:655px;font-size:10.9px;color:#1e2022;font-weight:400;letter-spacing:-0.635px;">VPN</div>
<div class="t" style="left:1070.8px;top:655px;font-size:10.9px;color:#1e2022;font-weight:400;letter-spacing:-0.148px;">cisco-xe1 (172.15.1.2)</div>
<div class="t" style="left:1194.5px;top:655px;font-size:10.9px;color:#1e2022;font-weight:400;letter-spacing:0.097px;">ipsec-vpn</div>
<div class="t" style="left:1266.4px;top:655px;width:123.6px;overflow:hidden;font-size:10.9px;letter-spacing:0.417px;color:#1e2022">Decrypted in community</div>
<div class="a" style="left:295px;top:671px;width:1095px;height:23px;background:#f3f3f3;"></div>
<div class="t" style="left:298.5px;top:679px;font-size:10.9px;color:#1e2022;font-weight:400;letter-spacing:-0.031px;">Today, 11:15:46 PM</div>
<svg style="left:423px;top:675px" width="16" height="13" viewBox="0 0 16 13"><path d="M2.5 2.3 L7 4 L14.2 6 M7 4 L2 7.8 L8.3 10.7 L14.2 6 M7 4 L8.3 10.7" stroke="#2a5a97" stroke-width="0.6" fill="none" opacity="0.7"/><circle cx="2.5" cy="2.3" r="1.3" fill="#2a5a97"/><circle cx="7" cy="4" r="1.7" fill="#2a5a97"/><circle cx="14.2" cy="6" r="1.8" fill="#2a5a97"/><circle cx="2" cy="7.8" r="1.9" fill="#2a5a97"/><circle cx="8.3" cy="10.7" r="2.2" fill="#2a5a97"/></svg>
<svg style="left:446px;top:676px" width="16" height="12" viewBox="0 0 16 12"><rect x="0" y="5" width="10" height="7" rx="0.8" fill="#2a5a97"/><path d="M7.2 5.5 V4.2 A3.3 3.3 0 0 1 14 4.2 V5" stroke="#2a5a97" stroke-width="1.9" fill="none"/></svg>
<svg style="left:468px;top:675px" width="14" height="14" viewBox="0 0 14 14"><path d="M2.4 2.3 L11.7 11.5" stroke="#2a5a97" stroke-width="1"/><circle cx="2.4" cy="2.3" r="2.1" fill="#2a5a97"/><circle cx="11.7" cy="11.5" r="2.3" fill="#2a5a97"/></svg>
<svg style="left:492px;top:676px" width="10" height="13" viewBox="0 0 10 13"><rect x="2.8" y="0" width="4.2" height="6" fill="#2a5a97"/><path d="M0 5.5 H10 L5 10Z" fill="#2a5a97"/><rect x="0" y="11" width="10" height="1.1" fill="#2a5a97"/></svg>
<svg style="left:512px;top:678px" width="15" height="8" viewBox="0 0 15 8"><path d="M0 8 V4 Q0 0 4 0 H11 Q15 0 15 4 V8Z" fill="#2a5a97"/><rect x="2" y="3.4" width="10.6" height="3" fill="#e8eef5"/><rect x="3" y="4.2" width="3.5" height="1.4" fill="#2a5a97"/><path d="M7.5 5.8 L9 4.4 L10 5.6 L11.5 4.2" stroke="#2a5a97" stroke-width="0.7" fill="none"/></svg>
<div class="t" style="left:531.8px;top:678px;font-size:10.9px;color:#1e2022;font-weight:400;letter-spacing:-0.129px;">cpsg</div>
<div class="t" style="left:583.8px;top:678px;font-size:10.9px;color:#1e2022;font-weight:400;letter-spacing:-0.186px;">10.10.15.22</div>
<div class="t" style="left:684px;top:678px;font-size:10.9px;color:#1e2022;font-weight:400;letter-spacing:-0.248px;">10.10.3.21</div>
<div class="t" style="left:760.5px;top:678px;font-size:10.9px;color:#1e2022;font-weight:400;letter-spacing:0.004px;">echo-request (ICMP)</div>
<div class="t" style="left:1030.8px;top:678px;font-size:10.9px;color:#1e2022;font-weight:400;letter-spacing:-0.635px;">VPN</div>
<div class="t" style="left:1070.8px;top:678px;font-size:10.9px;color:#1e2022;font-weight:400;letter-spacing:-0.148px;">cisco-xe1 (172.15.1.2)</div>
<div class="t" style="left:1194.5px;top:678px;font-size:10.9px;color:#1e2022;font-weight:400;letter-spacing:0.097px;">ipsec-vpn</div>
<div class="t" style="left:1266.4px;top:678px;width:123.6px;overflow:hidden;font-size:10.9px;letter-spacing:0.417px;color:#1e2022">Decrypted in community</div>
<div class="a" style="left:295px;top:694px;width:1095px;height:23px;background:#ffffff;"></div>
<div class="t" style="left:298.5px;top:702px;font-size:10.9px;color:#1e2022;font-weight:400;letter-spacing:-0.031px;">Today, 11:15:25 PM</div>
<svg style="left:423px;top:698px" width="16" height="13" viewBox="0 0 16 13"><path d="M2.5 2.3 L7 4 L14.2 6 M7 4 L2 7.8 L8.3 10.7 L14.2 6 M7 4 L8.3 10.7" stroke="#2a5a97" stroke-width="0.6" fill="none" opacity="0.7"/><circle cx="2.5" cy="2.3" r="1.3" fill="#2a5a97"/><circle cx="7" cy="4" r="1.7" fill="#2a5a97"/><circle cx="14.2" cy="6" r="1.8" fill="#2a5a97"/><circle cx="2" cy="7.8" r="1.9" fill="#2a5a97"/><circle cx="8.3" cy="10.7" r="2.2" fill="#2a5a97"/></svg>
<svg style="left:446px;top:699px" width="16" height="12" viewBox="0 0 16 12"><rect x="0" y="5" width="10" height="7" rx="0.8" fill="#2a5a97"/><path d="M7.2 5.5 V4.2 A3.3 3.3 0 0 1 14 4.2 V5" stroke="#2a5a97" stroke-width="1.9" fill="none"/></svg>
<svg style="left:468px;top:698px" width="14" height="14" viewBox="0 0 14 14"><path d="M2.4 2.3 L11.7 11.5" stroke="#2a5a97" stroke-width="1"/><circle cx="2.4" cy="2.3" r="2.1" fill="#2a5a97"/><circle cx="11.7" cy="11.5" r="2.3" fill="#2a5a97"/></svg>
<svg style="left:492px;top:699px" width="10" height="13" viewBox="0 0 10 13"><rect x="2.8" y="0" width="4.2" height="6" fill="#2a5a97"/><path d="M0 5.5 H10 L5 10Z" fill="#2a5a97"/><rect x="0" y="11" width="10" height="1.1" fill="#2a5a97"/></svg>
<svg style="left:512px;top:701px" width="15" height="8" viewBox="0 0 15 8"><path d="M0 8 V4 Q0 0 4 0 H11 Q15 0 15 4 V8Z" fill="#2a5a97"/><rect x="2" y="3.4" width="10.6" height="3" fill="#e8eef5"/><rect x="3" y="4.2" width="3.5" height="1.4" fill="#2a5a97"/><path d="M7.5 5.8 L9 4.4 L10 5.6 L11.5 4.2" stroke="#2a5a97" stroke-width="0.7" fill="none"/></svg>
<div class="t" style="left:531.8px;top:701px;font-size:10.9px;color:#1e2022;font-weight:400;letter-spacing:-0.129px;">cpsg</div>
<div class="t" style="left:583.8px;top:701px;font-size:10.9px;color:#1e2022;font-weight:400;letter-spacing:-0.186px;">10.10.15.22</div>
<div class="t" style="left:684px;top:701px;font-size:10.9px;color:#1e2022;font-weight:400;letter-spacing:-0.248px;">10.10.3.21</div>
<div class="t" style="left:760.5px;top:701px;font-size:10.9px;color:#1e2022;font-weight:400;letter-spacing:0.005px;">nbname (UDP/137)</div>
<div class="t" style="left:1030.8px;top:701px;font-size:10.9px;color:#1e2022;font-weight:400;letter-spacing:-0.635px;">VPN</div>
<div class="t" style="left:1070.8px;top:701px;font-size:10.9px;color:#1e2022;font-weight:400;letter-spacing:-0.148px;">cisco-xe1 (172.15.1.2)</div>
<div class="t" style="left:1194.5px;top:701px;font-size:10.9px;color:#1e2022;font-weight:400;letter-spacing:0.097px;">ipsec-vpn</div>
<div class="t" style="left:1266.4px;top:701px;width:123.6px;overflow:hidden;font-size:10.9px;letter-spacing:0.417px;color:#1e2022">Decrypted in community</div>
<div class="a" style="left:295px;top:717px;width:1095px;height:23px;background:#f3f3f3;"></div>
<div class="t" style="left:298.5px;top:725px;font-size:10.9px;color:#1e2022;font-weight:400;letter-spacing:-0.031px;">Today, 11:14:26 PM</div>
<svg style="left:423px;top:721px" width="16" height="13" viewBox="0 0 16 13"><path d="M2.5 2.3 L7 4 L14.2 6 M7 4 L2 7.8 L8.3 10.7 L14.2 6 M7 4 L8.3 10.7" stroke="#2a5a97" stroke-width="0.6" fill="none" opacity="0.7"/><circle cx="2.5" cy="2.3" r="1.3" fill="#2a5a97"/><circle cx="7" cy="4" r="1.7" fill="#2a5a97"/><circle cx="14.2" cy="6" r="1.8" fill="#2a5a97"/><circle cx="2" cy="7.8" r="1.9" fill="#2a5a97"/><circle cx="8.3" cy="10.7" r="2.2" fill="#2a5a97"/></svg>
<svg style="left:446px;top:722px" width="16" height="12" viewBox="0 0 16 12"><rect x="0" y="5" width="10" height="7" rx="0.8" fill="#2a5a97"/><path d="M7.2 5.5 V4.2 A3.3 3.3 0 0 1 14 4.2 V5" stroke="#2a5a97" stroke-width="1.9" fill="none"/></svg>
<svg style="left:468px;top:721px" width="14" height="14" viewBox="0 0 14 14"><path d="M2.4 2.3 L11.7 11.5" stroke="#2a5a97" stroke-width="1"/><circle cx="2.4" cy="2.3" r="2.1" fill="#2a5a97"/><circle cx="11.7" cy="11.5" r="2.3" fill="#2a5a97"/></svg>
<svg style="left:492px;top:722px" width="10" height="13" viewBox="0 0 10 13"><rect x="2.8" y="0" width="4.2" height="6" fill="#2a5a97"/><path d="M0 5.5 H10 L5 10Z" fill="#2a5a97"/><rect x="0" y="11" width="10" height="1.1" fill="#2a5a97"/></svg>
<svg style="left:512px;top:724px" width="15" height="8" viewBox="0 0 15 8"><path d="M0 8 V4 Q0 0 4 0 H11 Q15 0 15 4 V8Z" fill="#2a5a97"/><rect x="2" y="3.4" width="10.6" height="3" fill="#e8eef5"/><rect x="3" y="4.2" width="3.5" height="1.4" fill="#2a5a97"/><path d="M7.5 5.8 L9 4.4 L10 5.6 L11.5 4.2" stroke="#2a5a97" stroke-width="0.7" fill="none"/></svg>
<div class="t" style="left:531.8px;top:724px;font-size:10.9px;color:#1e2022;font-weight:400;letter-spacing:-0.129px;">cpsg</div>
<div class="t" style="left:583.8px;top:724px;font-size:10.9px;color:#1e2022;font-weight:400;letter-spacing:-0.186px;">10.10.15.22</div>
<div class="t" style="left:684px;top:724px;font-size:10.9px;color:#1e2022;font-weight:400;letter-spacing:-0.248px;">10.10.3.21</div>
<div class="t" style="left:760.5px;top:724px;font-size:10.9px;color:#1e2022;font-weight:400;letter-spacing:0.004px;">echo-request (ICMP)</div>
<div class="t" style="left:1030.8px;top:724px;font-size:10.9px;color:#1e2022;font-weight:400;letter-spacing:-0.635px;">VPN</div>
<div class="t" style="left:1070.8px;top:724px;font-size:10.9px;color:#1e2022;font-weight:400;letter-spacing:-0.148px;">cisco-xe1 (172.15.1.2)</div>
<div class="t" style="left:1194.5px;top:724px;font-size:10.9px;color:#1e2022;font-weight:400;letter-spacing:0.097px;">ipsec-vpn</div>
<div class="t" style="left:1266.4px;top:724px;width:123.6px;overflow:hidden;font-size:10.9px;letter-spacing:0.417px;color:#1e2022">Decrypted in community</div>
<div class="a" style="left:1390px;top:486px;width:1px;height:256px;background:#dadddd;"></div>
<div class="a" style="left:1408px;top:30px;width:4px;height:712px;background:#131a25;"></div>
<div class="a" style="left:1424px;top:18px;width:203px;height:24px;border:1px solid #c5cdd3;background:#fff"></div>
<svg style="left:1430px;top:23px" width="16" height="14" viewBox="0 0 16 14"><circle cx="5.8" cy="5.8" r="4.5" stroke="#22304a" stroke-width="1.9" fill="none"/><path d="M9.2 9.2 L14 13.5" stroke="#22304a" stroke-width="2.6"/></svg>
<div class="t" style="left:1452.5px;top:26px;font-size:11.5px;color:#333a44;font-weight:400;letter-spacing:-0.326px;font-style:italic">Search...</div>
<svg style="left:1431px;top:55px" width="13" height="9" viewBox="0 0 13 9"><path d="M1 4.5 H13 M5 0.8 L1 4.5 L5 8.2" stroke="#a3a8ad" stroke-width="1.8" fill="none"/></svg>
<svg style="left:1456px;top:52px" width="13" height="13" viewBox="0 0 13 13"><path d="M6.5 0 L13 6 H11 V13 H8 V9 H5 V13 H2 V6 H0Z" fill="#a3a8ad"/></svg>
<div class="a" style="left:1478px;top:48px;width:1px;height:21px;background:#c9cfd3;"></div>
<svg style="left:1487px;top:52px" width="14" height="13" viewBox="0 0 14 13"><circle cx="1.5" cy="1.5" r="1.5" fill="#22304a"/><circle cx="1.5" cy="6.5" r="1.5" fill="#22304a"/><circle cx="1.5" cy="11.5" r="1.5" fill="#22304a"/><path d="M5 1.5 H14 M5 6.5 H14 M5 11.5 H14" stroke="#22304a" stroke-width="1.4"/></svg>
<div class="a" style="left:1509px;top:48px;width:1px;height:21px;background:#c9cfd3;"></div>
<svg style="left:1524px;top:53px" width="14" height="13" viewBox="0 0 14 13"><path d="M7 0 V13 M0.5 6.5 H13.5 M2.5 2 L11.5 11 M11.5 2 L2.5 11" stroke="#22304a" stroke-width="1.2"/><circle cx="7" cy="6.5" r="2.3" fill="#22304a"/></svg>
<div class="t" style="left:1544px;top:55px;font-size:11.2px;color:#1e2022;font-weight:400;letter-spacing:0.084px;">New...</div>
<svg style="left:1580px;top:58px" width="6" height="3.5" viewBox="0 0 6 3.5"><path d="M0 0 H6 L3 3.5Z" fill="#22304a"/></svg>
<div class="a" style="left:1424px;top:78px;width:203px;height:1px;background:repeating-linear-gradient(90deg,#bcc3ca 0 1px,transparent 1px 4.05px);"></div>
<div class="t" style="left:1419.7px;top:97px;font-size:11.6px;color:#1a1f28;font-weight:700;letter-spacing:-0.055px;">Object Categories</div>
<div class="t" style="left:1444.5px;top:124px;font-size:11.5px;color:#1e2022;font-weight:400;letter-spacing:0.023px;">Network Objects</div>
<div class="t" style="right:39px;top:124px;font-size:11.2px;color:#1e2022;font-weight:400;">22</div>
<div class="t" style="left:1444.5px;top:148px;font-size:11.5px;color:#1e2022;font-weight:400;letter-spacing:-0.664px;">Services</div>
<div class="t" style="right:39px;top:148px;font-size:11.2px;color:#1e2022;font-weight:400;">521</div>
<div class="t" style="left:1444.5px;top:172px;font-size:11.5px;color:#1e2022;font-weight:400;letter-spacing:0.068px;">Applications/Categories</div>
<div class="t" style="right:39px;top:172px;font-size:11.2px;color:#1e2022;font-weight:400;">8314</div>
<div class="t" style="left:1444.5px;top:196px;font-size:11.5px;color:#1e2022;font-weight:400;letter-spacing:-0.244px;">VPN Communities</div>
<div class="t" style="right:39px;top:196px;font-size:11.2px;color:#1e2022;font-weight:400;">3</div>
<div class="t" style="left:1444.5px;top:220px;font-size:11.5px;color:#1e2022;font-weight:400;letter-spacing:-0.507px;">Data Types</div>
<div class="t" style="right:39px;top:220px;font-size:11.2px;color:#1e2022;font-weight:400;">62</div>
<div class="t" style="left:1444.5px;top:244px;font-size:11.5px;color:#1e2022;font-weight:400;letter-spacing:-0.029px;">Users/Identities</div>
<div class="t" style="right:39px;top:244px;font-size:11.2px;color:#1e2022;font-weight:400;">6</div>
<div class="t" style="left:1444.5px;top:268px;font-size:11.5px;color:#1e2022;font-weight:400;letter-spacing:-0.689px;">Servers</div>
<div class="t" style="right:39px;top:268px;font-size:11.2px;color:#1e2022;font-weight:400;">1</div>
<div class="t" style="left:1444.5px;top:292px;font-size:11.5px;color:#1e2022;font-weight:400;letter-spacing:-0.259px;">Time Objects</div>
<div class="t" style="right:39px;top:292px;font-size:11.2px;color:#1e2022;font-weight:400;">3</div>
<div class="t" style="left:1444.5px;top:316px;font-size:11.5px;color:#1e2022;font-weight:400;letter-spacing:-0.124px;">UserCheck Interactions</div>
<div class="t" style="right:39px;top:316px;font-size:11.2px;color:#1e2022;font-weight:400;">15</div>
<div class="t" style="left:1444.5px;top:340px;font-size:11.5px;color:#1e2022;font-weight:400;letter-spacing:-0.096px;">Limit</div>
<div class="t" style="right:39px;top:340px;font-size:11.2px;color:#1e2022;font-weight:400;">4</div>
<svg style="left:1426px;top:123px" width="11" height="10" viewBox="0 0 11 10"><rect x="3" y="0.3" width="5.2" height="2.6" rx="1.2" fill="#22304a"/><path d="M5.6 2.8 V5 M2.2 7.2 V5 H9 V7.2" stroke="#22304a" stroke-width="1.1" fill="none"/><rect x="0" y="7" width="4.4" height="2.9" rx="1.3" fill="#22304a"/><rect x="6.2" y="7" width="4.8" height="2.9" rx="1.3" fill="#22304a"/></svg>
<svg style="left:1425px;top:147px" width="12" height="12" viewBox="0 0 12 12"><rect x="0" y="4.3" width="12" height="1.2" fill="#22304a"/><rect x="0" y="6.3" width="12" height="1.2" fill="#22304a"/><path d="M0 4.4 L5.6 0 V4.4Z M6 7.5 H12 L6 12Z" fill="#22304a"/></svg>
<svg style="left:1426px;top:171px" width="11" height="11" viewBox="0 0 11 11"><rect x="0" y="2.3" width="3.9" height="3.5" rx="0.8" fill="#22304a"/><rect x="4.8" y="0" width="6.2" height="5.8" rx="0.8" fill="#22304a"/><rect x="0" y="6.8" width="4" height="4" rx="0.8" fill="#22304a"/><rect x="4.8" y="6.8" width="4.2" height="4" rx="0.8" fill="#22304a"/></svg>
<svg style="left:1425px;top:194px" width="13" height="13" viewBox="0 0 13 13"><path d="M4.4 1.5 V4.4 H1.5 M8.6 1.5 V4.4 H11.6 M11.6 8.6 H8.6 V11.6 M1.5 8.6 H4.4 V11.6" stroke="#22304a" stroke-width="1.05" fill="none"/><circle cx="4.4" cy="1.5" r="1.45" fill="#22304a"/><circle cx="8.6" cy="1.5" r="1.45" fill="#22304a"/><circle cx="11.6" cy="4.4" r="1.45" fill="#22304a"/><circle cx="11.6" cy="8.6" r="1.45" fill="#22304a"/><circle cx="8.6" cy="11.6" r="1.45" fill="#22304a"/><circle cx="4.4" cy="11.6" r="1.45" fill="#22304a"/><circle cx="1.5" cy="8.6" r="1.45" fill="#22304a"/><circle cx="1.5" cy="4.4" r="1.45" fill="#22304a"/><rect x="5" y="5" width="3" height="3" fill="#22304a"/></svg>
<svg style="left:93px;top:693px" width="13" height="13" viewBox="0 0 13 13"><path d="M4.4 1.5 V4.4 H1.5 M8.6 1.5 V4.4 H11.6 M11.6 8.6 H8.6 V11.6 M1.5 8.6 H4.4 V11.6" stroke="#22304a" stroke-width="1.05" fill="none"/><circle cx="4.4" cy="1.5" r="1.45" fill="#22304a"/><circle cx="8.6" cy="1.5" r="1.45" fill="#22304a"/><circle cx="11.6" cy="4.4" r="1.45" fill="#22304a"/><circle cx="11.6" cy="8.6" r="1.45" fill="#22304a"/><circle cx="8.6" cy="11.6" r="1.45" fill="#22304a"/><circle cx="4.4" cy="11.6" r="1.45" fill="#22304a"/><circle cx="1.5" cy="8.6" r="1.45" fill="#22304a"/><circle cx="1.5" cy="4.4" r="1.45" fill="#22304a"/><rect x="5" y="5" width="3" height="3" fill="#22304a"/></svg>
<svg style="left:1424px;top:220px" width="15" height="9" viewBox="0 0 15 9"><path d="M0 8.7 L4.4 0 H6.2 V8.7Z" fill="#22304a"/><circle cx="11" cy="5.6" r="2.9" fill="none" stroke="#22304a" stroke-width="1.7"/><circle cx="11.5" cy="5.3" r="0.8" fill="#22304a"/></svg>
<svg style="left:1423px;top:243px" width="16" height="11" viewBox="0 0 16 11"><circle cx="3.6" cy="1.6" r="1.6" fill="#22304a"/><circle cx="12.6" cy="1.6" r="1.6" fill="#22304a"/><path d="M0 7.3 Q0 3.6 3.6 3.6 Q6 3.6 6.5 5.5 L5 7.3Z M16 7.3 Q16 3.6 12.6 3.6 Q10 3.6 9.5 5.5 L11 7.3Z" fill="#22304a"/><circle cx="8" cy="4.3" r="2.3" fill="#22304a"/><path d="M2.3 10.8 Q2.3 7 5.8 7 H10.2 Q13.7 7 13.7 10.8Z" fill="#22304a"/></svg>
<svg style="left:1426px;top:265px" width="9" height="14" viewBox="0 0 9 14"><rect x="0" y="0" width="9" height="13.8" rx="0.8" fill="#22304a"/><rect x="1.4" y="2.3" width="6.2" height="1" fill="#e6ebef"/><rect x="1.4" y="4.2" width="6.2" height="1" fill="#e6ebef"/><rect x="2" y="12.6" width="5" height="1.4" fill="#f4f8f5"/></svg>
<svg style="left:1425px;top:290px" width="13" height="13" viewBox="0 0 13 13"><circle cx="6.1" cy="5.7" r="5.6" fill="none" stroke="#22304a" stroke-width="1.1"/><path d="M3.6 4.6 L6.1 6.6 L8.6 4.6" stroke="#22304a" stroke-width="1.1" fill="none"/></svg>
<svg style="left:1424px;top:313px" width="15" height="15" viewBox="0 0 15 15"><ellipse cx="7.3" cy="7.3" rx="7.4" ry="2.9" transform="rotate(45 7.3 7.3)" fill="none" stroke="#22304a" stroke-width="1.5"/><circle cx="12.3" cy="1.5" r="1.3" fill="#22304a"/><circle cx="2.3" cy="11.4" r="1.3" fill="#22304a"/><circle cx="8.4" cy="5.5" r="1.1" fill="#22304a"/><circle cx="5.5" cy="8.3" r="1.1" fill="#22304a"/></svg>
<svg style="left:1424px;top:337px" width="15" height="14" viewBox="0 0 15 14"><circle cx="7.1" cy="6.7" r="6.8" fill="#22304a"/><path d="M2.2 6 A5.2 5.2 0 0 1 12 6" stroke="#f4f8f5" stroke-width="1" fill="none"/><rect x="6.3" y="4.5" width="1.6" height="6" fill="#f4f8f5"/><circle cx="7.1" cy="10.6" r="1.6" fill="#f4f8f5"/></svg>
<svg style="left:1649px;top:15px" width="8" height="5" viewBox="0 0 8 5"><path d="M0 0 L3.5 2.5 L0 5Z M4 0 L7.5 2.5 L4 5Z" fill="#aab2bc"/></svg>
<div class="t" style="left:1643px;top:31px;font-size:12px;color:#f0ecf0;transform-origin:0 0;transform:translate(17px,0) rotate(90deg)">Objects</div>
<div class="t" style="left:1643px;top:86px;font-size:12px;color:#8993a0;transform-origin:0 0;transform:translate(17px,0) rotate(90deg)">Validations</div>
</body></html>
